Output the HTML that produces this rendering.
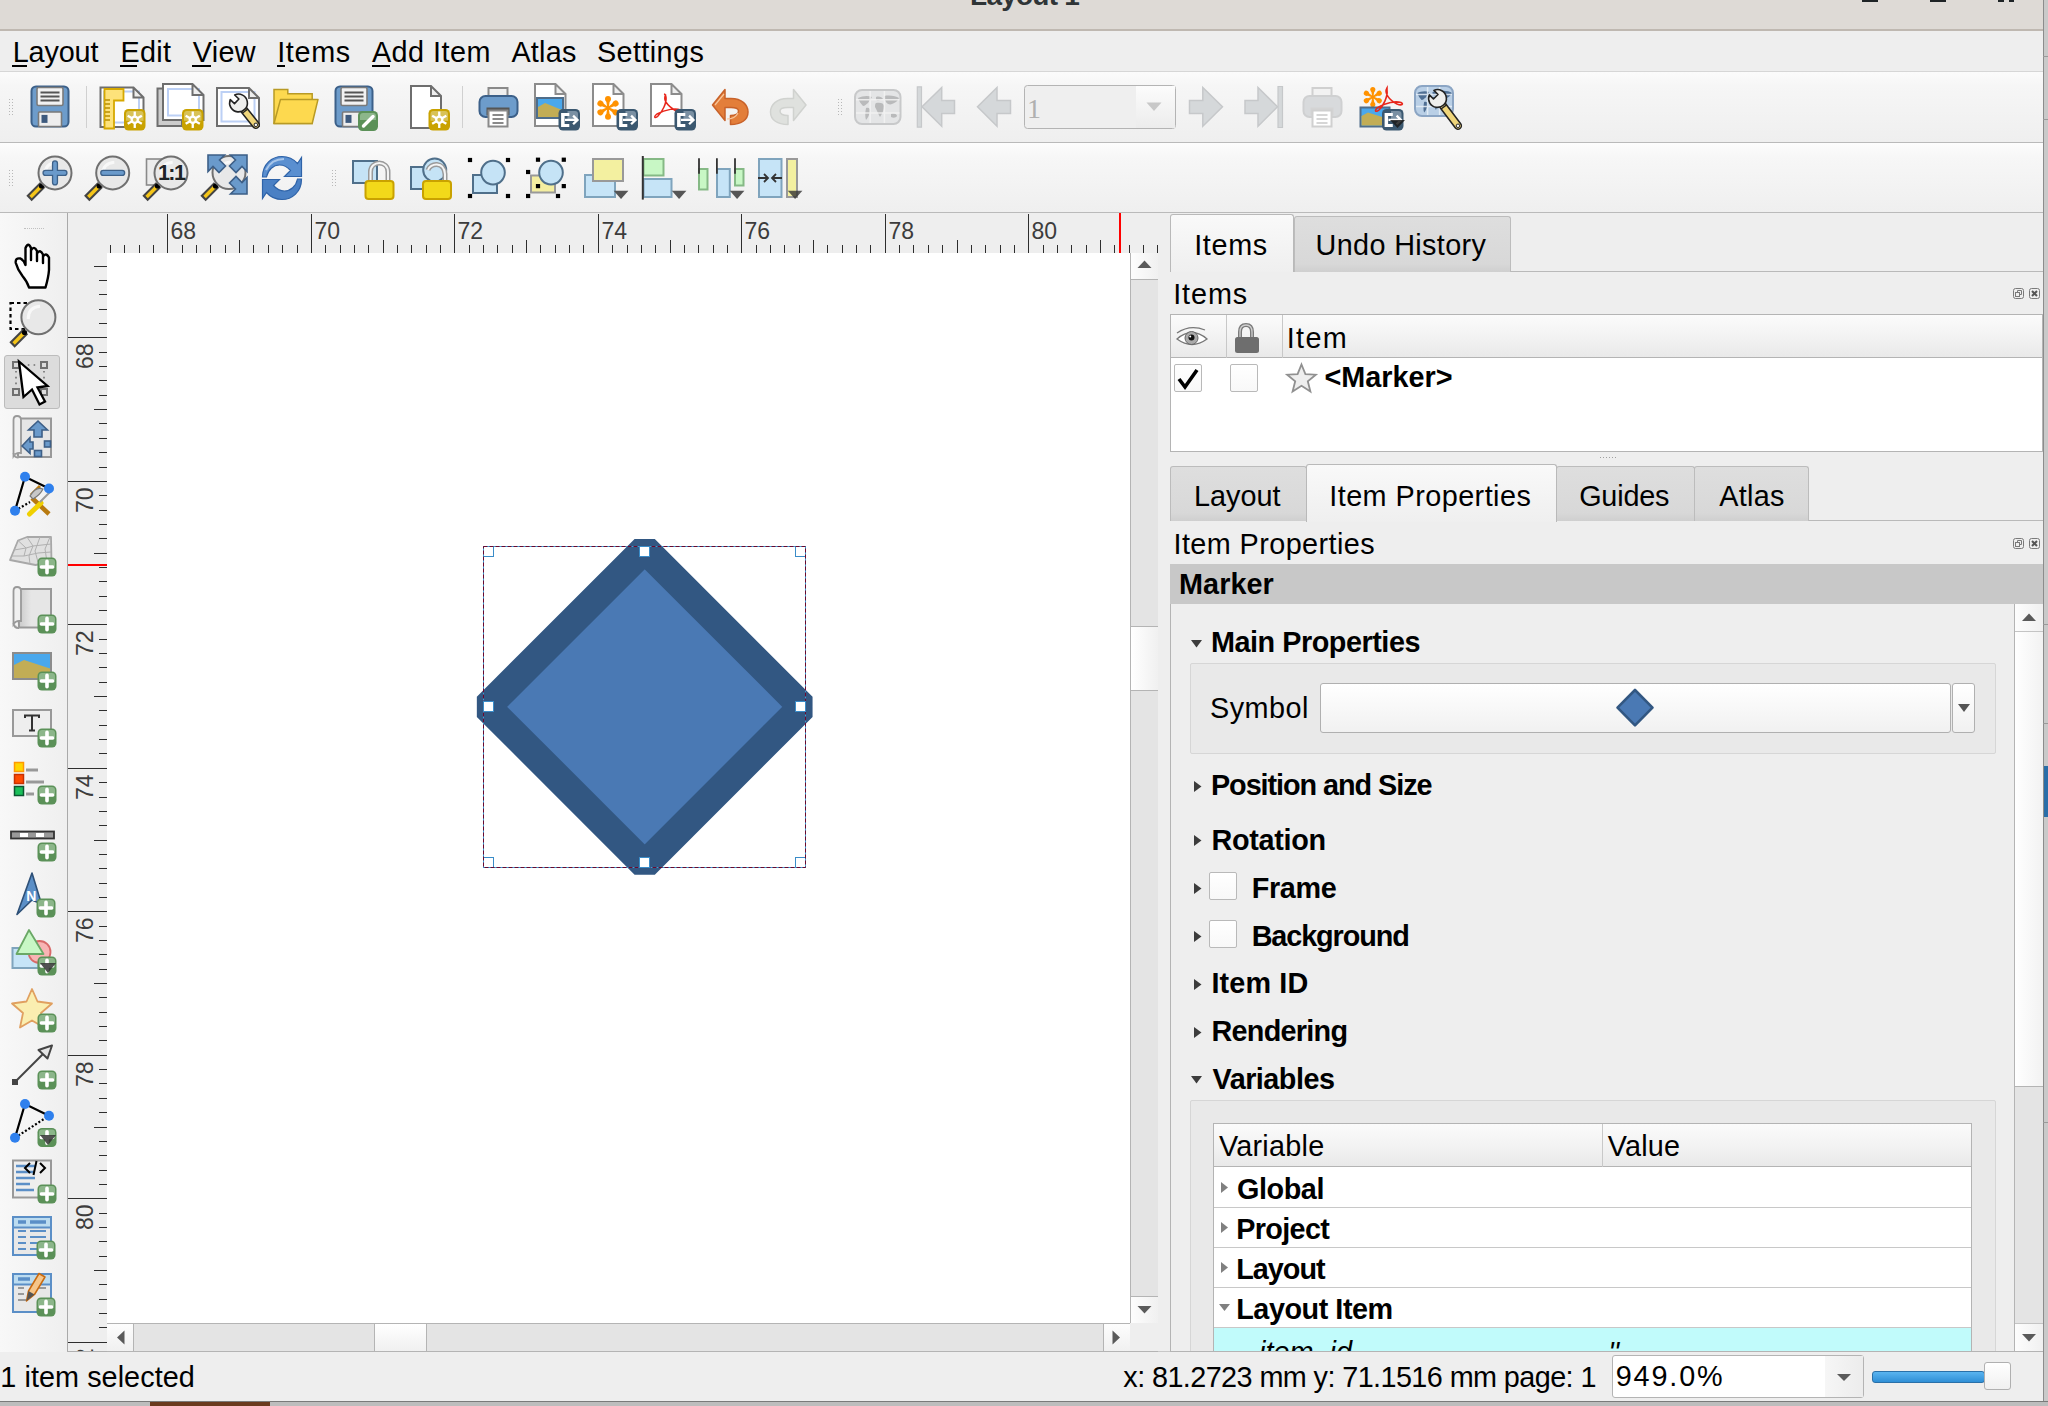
<!DOCTYPE html><html><head><meta charset="utf-8"><style>
html,body{margin:0;padding:0;width:2048px;height:1406px;overflow:hidden;background:#c8c8c8;}
body{position:relative;font-family:"Liberation Sans",sans-serif;}
div{position:absolute;box-sizing:border-box;}
.t{white-space:pre;line-height:1;}
svg{position:absolute;overflow:visible;}
</style></head><body>
<div style="left:2043px;top:0px;width:5px;height:1406px;background:#c9c9c9;border-left:1px solid #8c8c8c;"></div>
<div style="left:2043px;top:56px;width:5px;height:1px;background:#9a9a9a;"></div>
<div style="left:2043px;top:119px;width:5px;height:1px;background:#9a9a9a;"></div>
<div style="left:2043px;top:624px;width:5px;height:1px;background:#9a9a9a;"></div>
<div style="left:2043px;top:723px;width:5px;height:1px;background:#9a9a9a;"></div>
<div style="left:2043px;top:1122px;width:5px;height:1px;background:#9a9a9a;"></div>
<div style="left:2044px;top:766px;width:4px;height:51px;background:#2a6ea8;"></div>
<div style="left:0px;top:1401px;width:2048px;height:5px;background:#bdbdbd;border-top:1px solid #7a7a7a;"></div>
<div style="left:150px;top:1402px;width:120px;height:4px;background:#6b3a1e;"></div>
<div style="left:0px;top:0px;width:2043px;height:29px;background:#dedad6;"></div>
<div style="left:0px;top:29px;width:2043px;height:2px;background:#bfb8b1;"></div>
<div class="t" style="left:970.11px;top:-18.20px;font-size:28px;font-weight:700;color:#2e3436;letter-spacing:-0.774px;">Layout 1</div>
<div style="left:1862px;top:0px;width:16px;height:2px;background:#1e2326;"></div>
<div style="left:1930px;top:0px;width:16px;height:2px;background:#1e2326;"></div>
<div style="left:1998px;top:0px;width:6px;height:2px;background:#1e2326;"></div>
<div style="left:2009px;top:0px;width:5px;height:2px;background:#1e2326;"></div>
<div style="left:0px;top:31px;width:2043px;height:40px;background:#eeeeee;"></div>
<div style="left:0px;top:71px;width:2043px;height:1px;background:#d6d6d6;"></div>
<div class="t" style="left:12.72px;top:37.52px;font-size:28.8px;font-weight:400;color:#000;letter-spacing:-0.136px;">Layout</div>
<div class="t" style="left:120.62px;top:37.52px;font-size:28.8px;font-weight:400;color:#000;letter-spacing:0.228px;">Edit</div>
<div class="t" style="left:192.76px;top:37.52px;font-size:28.8px;font-weight:400;color:#000;letter-spacing:0.317px;">View</div>
<div class="t" style="left:277.14px;top:37.52px;font-size:28.8px;font-weight:400;color:#000;letter-spacing:0.664px;">Items</div>
<div class="t" style="left:371.93px;top:37.52px;font-size:28.8px;font-weight:400;color:#000;letter-spacing:0.482px;">Add Item</div>
<div class="t" style="left:511.43px;top:37.52px;font-size:28.8px;font-weight:400;color:#000;letter-spacing:0.218px;">Atlas</div>
<div class="t" style="left:596.90px;top:37.52px;font-size:28.8px;font-weight:400;color:#000;letter-spacing:0.409px;">Settings</div>
<div style="left:12px;top:65px;width:15px;height:2px;background:#000;"></div>
<div style="left:120px;top:65px;width:17px;height:2px;background:#000;"></div>
<div style="left:192px;top:65px;width:19px;height:2px;background:#000;"></div>
<div style="left:277px;top:65px;width:8px;height:2px;background:#000;"></div>
<div style="left:372px;top:65px;width:18px;height:2px;background:#000;"></div>
<div style="left:0px;top:72px;width:2043px;height:70px;background:linear-gradient(#fbfbfb,#f6f6f6 20%,#efefef);"></div>
<div style="left:0px;top:142px;width:2043px;height:1px;background:#bababa;"></div>
<div style="left:0px;top:143px;width:2043px;height:69px;background:linear-gradient(#fdfdfd,#f7f7f7 20%,#efefef);"></div>
<div style="left:0px;top:212px;width:2043px;height:1px;background:#bababa;"></div>
<div style="left:9px;top:99px;width:1px;height:1px;background:#b8b8b8;"></div><div style="left:12px;top:99px;width:1px;height:1px;background:#b8b8b8;"></div><div style="left:9px;top:102px;width:1px;height:1px;background:#b8b8b8;"></div><div style="left:12px;top:102px;width:1px;height:1px;background:#b8b8b8;"></div><div style="left:9px;top:105px;width:1px;height:1px;background:#b8b8b8;"></div><div style="left:12px;top:105px;width:1px;height:1px;background:#b8b8b8;"></div><div style="left:9px;top:108px;width:1px;height:1px;background:#b8b8b8;"></div><div style="left:12px;top:108px;width:1px;height:1px;background:#b8b8b8;"></div><div style="left:9px;top:111px;width:1px;height:1px;background:#b8b8b8;"></div><div style="left:12px;top:111px;width:1px;height:1px;background:#b8b8b8;"></div><div style="left:9px;top:114px;width:1px;height:1px;background:#b8b8b8;"></div><div style="left:12px;top:114px;width:1px;height:1px;background:#b8b8b8;"></div>
<div style="left:838px;top:99px;width:1px;height:1px;background:#b8b8b8;"></div><div style="left:841px;top:99px;width:1px;height:1px;background:#b8b8b8;"></div><div style="left:838px;top:102px;width:1px;height:1px;background:#b8b8b8;"></div><div style="left:841px;top:102px;width:1px;height:1px;background:#b8b8b8;"></div><div style="left:838px;top:105px;width:1px;height:1px;background:#b8b8b8;"></div><div style="left:841px;top:105px;width:1px;height:1px;background:#b8b8b8;"></div><div style="left:838px;top:108px;width:1px;height:1px;background:#b8b8b8;"></div><div style="left:841px;top:108px;width:1px;height:1px;background:#b8b8b8;"></div><div style="left:838px;top:111px;width:1px;height:1px;background:#b8b8b8;"></div><div style="left:841px;top:111px;width:1px;height:1px;background:#b8b8b8;"></div><div style="left:838px;top:114px;width:1px;height:1px;background:#b8b8b8;"></div><div style="left:841px;top:114px;width:1px;height:1px;background:#b8b8b8;"></div>
<div style="left:9px;top:170px;width:1px;height:1px;background:#b8b8b8;"></div><div style="left:12px;top:170px;width:1px;height:1px;background:#b8b8b8;"></div><div style="left:9px;top:173px;width:1px;height:1px;background:#b8b8b8;"></div><div style="left:12px;top:173px;width:1px;height:1px;background:#b8b8b8;"></div><div style="left:9px;top:176px;width:1px;height:1px;background:#b8b8b8;"></div><div style="left:12px;top:176px;width:1px;height:1px;background:#b8b8b8;"></div><div style="left:9px;top:179px;width:1px;height:1px;background:#b8b8b8;"></div><div style="left:12px;top:179px;width:1px;height:1px;background:#b8b8b8;"></div><div style="left:9px;top:182px;width:1px;height:1px;background:#b8b8b8;"></div><div style="left:12px;top:182px;width:1px;height:1px;background:#b8b8b8;"></div><div style="left:9px;top:185px;width:1px;height:1px;background:#b8b8b8;"></div><div style="left:12px;top:185px;width:1px;height:1px;background:#b8b8b8;"></div>
<div style="left:332px;top:170px;width:1px;height:1px;background:#b8b8b8;"></div><div style="left:335px;top:170px;width:1px;height:1px;background:#b8b8b8;"></div><div style="left:332px;top:173px;width:1px;height:1px;background:#b8b8b8;"></div><div style="left:335px;top:173px;width:1px;height:1px;background:#b8b8b8;"></div><div style="left:332px;top:176px;width:1px;height:1px;background:#b8b8b8;"></div><div style="left:335px;top:176px;width:1px;height:1px;background:#b8b8b8;"></div><div style="left:332px;top:179px;width:1px;height:1px;background:#b8b8b8;"></div><div style="left:335px;top:179px;width:1px;height:1px;background:#b8b8b8;"></div><div style="left:332px;top:182px;width:1px;height:1px;background:#b8b8b8;"></div><div style="left:335px;top:182px;width:1px;height:1px;background:#b8b8b8;"></div><div style="left:332px;top:185px;width:1px;height:1px;background:#b8b8b8;"></div><div style="left:335px;top:185px;width:1px;height:1px;background:#b8b8b8;"></div>
<div style="left:86px;top:86px;width:1px;height:42px;background:#d0d0d0;"></div>
<div style="left:462px;top:86px;width:1px;height:42px;background:#d0d0d0;"></div>
<svg style="left:0;top:0" width="2043" height="213"><defs><linearGradient id="cg" x1="0" y1="0" x2="0" y2="1"><stop offset="0" stop-color="#fcfcfc"/><stop offset="1" stop-color="#ececec"/></linearGradient></defs><rect x="31.5" y="86.5" width="37" height="40" rx="4.5" fill="#6d9ccb" stroke="#3c6089" stroke-width="2"/>
<rect x="37.0" y="87.5" width="26" height="18.06" rx="1.5" fill="#f2f2f2" stroke="#7a7a7a" stroke-width="1.6"/>
<path d="M40.5,92.5 H59.5 M40.5,96.5 H59.5 M40.5,100.5 H59.5" stroke="#555" stroke-width="2"/>
<rect x="38.5" y="111.96000000000001" width="23" height="14.54" rx="1" fill="#eeeeee" stroke="#7a7a7a" stroke-width="1.6"/>
<rect x="41.5" y="114.9" width="6" height="7.98" fill="#3d5a7e"/><path d="M100.5,87.5 H133.5 L143.5,97.5 V127.0 H100.5 Z" fill="#fff"/><rect x="104" y="91.5" width="35" height="31" fill="none" stroke="#bcd0f5" stroke-width="2"/>
<path d="M133.5,87.5 V97.5 H143.5 Z" fill="#eeeeee"/>
<path d="M100.5,87.5 H133.5 L143.5,97.5 V127.0 H100.5 Z M133.5,87.5 V97.5 H143.5" fill="none" stroke="#6e6e6e" stroke-width="2" stroke-linejoin="miter"/><path d="M104.5,89 H123.5 V100.5 H114 V128.5 H104.5 Z" fill="#fde27a" stroke="#d6a800" stroke-width="1.8"/><path d="M105,100 H110 M105,104 H110 M105,108 H110 M105,112 H110 M105,116 H110 M105,120 H110" stroke="#b88f00" stroke-width="1.5"/><g transform="translate(124,109)">
<rect x="0" y="0" width="21.5" height="21.5" rx="4.5" fill="#c9a200"/>
<path d="M2,5 Q2,2 5,2 H16.5 Q19.5,2 19.5,5 V11.825000000000001 H2 Z" fill="#d8c257"/>
<path d="M10.75,2.55 L10.75,18.95" stroke="#fff" stroke-width="2.3"/><path d="M3.65,6.65 L17.85,14.85" stroke="#fff" stroke-width="2.3"/><path d="M17.85,6.65 L3.65,14.85" stroke="#fff" stroke-width="2.3"/>
<circle cx="10.75" cy="10.75" r="4.2" fill="#fff"/><circle cx="10.75" cy="10.75" r="1.9" fill="#d8c257"/>
</g><path d="M157.5,88.5 H182 V126 H157.5 Z" fill="#cccccc" stroke="#6e6e6e" stroke-width="2"/><path d="M163,84 H192.5 L203.5,95 V120 H163 Z" fill="#fff"/><rect x="168" y="89" width="31" height="26.5" fill="none" stroke="#bcd0f5" stroke-width="2"/>
<path d="M192.5,84 V95 H203.5 Z" fill="#eeeeee"/>
<path d="M163,84 H192.5 L203.5,95 V120 H163 Z M192.5,84 V95 H203.5" fill="none" stroke="#6e6e6e" stroke-width="2" stroke-linejoin="miter"/><g transform="translate(182,109)">
<rect x="0" y="0" width="21.5" height="21.5" rx="4.5" fill="#c9a200"/>
<path d="M2,5 Q2,2 5,2 H16.5 Q19.5,2 19.5,5 V11.825000000000001 H2 Z" fill="#d8c257"/>
<path d="M10.75,2.55 L10.75,18.95" stroke="#fff" stroke-width="2.3"/><path d="M3.65,6.65 L17.85,14.85" stroke="#fff" stroke-width="2.3"/><path d="M17.85,6.65 L3.65,14.85" stroke="#fff" stroke-width="2.3"/>
<circle cx="10.75" cy="10.75" r="4.2" fill="#fff"/><circle cx="10.75" cy="10.75" r="1.9" fill="#d8c257"/>
</g><path d="M217,88 H249 L259,98 V126 H217 Z" fill="#fff"/><rect x="221.5" y="92" width="33" height="29.5" fill="none" stroke="#bcd0f5" stroke-width="2"/>
<path d="M249,88 V98 H259 Z" fill="#eeeeee"/>
<path d="M217,88 H249 L259,98 V126 H217 Z M249,88 V98 H259" fill="none" stroke="#6e6e6e" stroke-width="2" stroke-linejoin="miter"/><g transform="translate(238.5,103) rotate(51.5)">
<rect x="5" y="-3.4" width="26.312936623702353" height="6.8" rx="3.4" fill="#efd57a" stroke="#222" stroke-width="1.5"/>
<path d="M8,-3.4 V3.4 M10.5,-3.4 V3.4" stroke="#222" stroke-width="1.3"/>
<circle cx="27.912936623702354" cy="0" r="1.7" fill="#fff" stroke="#333" stroke-width="1"/>
<path d="M-8.3,-3.2 L-2.5,-3.2 L-2.5,3.2 L-8.3,3.2 A8.9,8.9 0 1 0 -8.3,-3.2 Z" transform="rotate(-8)" fill="#eeeeec" stroke="#222" stroke-width="1.6" stroke-linejoin="round"/>
</g><path d="M274,123.5 V89.5 H287.8 V93.8 H312.2 V123.5 Z" fill="#fdd94f" stroke="#b89a25" stroke-width="1.5"/><path d="M274,123.5 L280.5,99.4 H318 L312.2,123.5 Z" fill="#fdd94f" stroke="#b89a25" stroke-width="1.5" stroke-linejoin="round"/><rect x="335.5" y="86.5" width="37" height="40" rx="4.5" fill="#6d9ccb" stroke="#3c6089" stroke-width="2"/>
<rect x="341.0" y="87.5" width="26" height="18.06" rx="1.5" fill="#f2f2f2" stroke="#7a7a7a" stroke-width="1.6"/>
<path d="M344.5,92.5 H363.5 M344.5,96.5 H363.5 M344.5,100.5 H363.5" stroke="#555" stroke-width="2"/>
<rect x="342.5" y="111.96000000000001" width="23" height="14.54" rx="1" fill="#eeeeee" stroke="#7a7a7a" stroke-width="1.6"/>
<rect x="345.5" y="114.9" width="6" height="7.98" fill="#3d5a7e"/><g transform="translate(358,111)"><rect width="20" height="20" rx="4.5" fill="#5b9158"/><path d="M2,5 Q2,2 5,2 H15 Q18,2 18,5 V9 H2 Z" fill="#8cb68a"/><path d="M5.5,15 L15,5.5" stroke="#fff" stroke-width="3.4" stroke-linecap="round"/></g><path d="M411,86 H431 L441,96 V128 H411 Z" fill="#fff"/>
<path d="M431,86 V96 H441 Z" fill="#eeeeee"/>
<path d="M411,86 H431 L441,96 V128 H411 Z M431,86 V96 H441" fill="none" stroke="#6e6e6e" stroke-width="2" stroke-linejoin="miter"/><g transform="translate(428.5,109)">
<rect x="0" y="0" width="21.5" height="21.5" rx="4.5" fill="#c9a200"/>
<path d="M2,5 Q2,2 5,2 H16.5 Q19.5,2 19.5,5 V11.825000000000001 H2 Z" fill="#d8c257"/>
<path d="M10.75,2.55 L10.75,18.95" stroke="#fff" stroke-width="2.3"/><path d="M3.65,6.65 L17.85,14.85" stroke="#fff" stroke-width="2.3"/><path d="M17.85,6.65 L3.65,14.85" stroke="#fff" stroke-width="2.3"/>
<circle cx="10.75" cy="10.75" r="4.2" fill="#fff"/><circle cx="10.75" cy="10.75" r="1.9" fill="#d8c257"/>
</g><rect x="488.5" y="88" width="19" height="13" fill="#efefef" stroke="#8a8a8a" stroke-width="2"/>
<rect x="479.5" y="96" width="38" height="21" rx="6" fill="#6d9ccb" stroke="#3c6089" stroke-width="2"/>
<rect x="486.5" y="107.5" width="23" height="8" fill="#555"/>
<rect x="488.5" y="110.5" width="19" height="16" fill="#fff" stroke="#8a8a8a" stroke-width="2"/>
<path d="M492.5,115 H503.5 M492.5,119 H503.5 M492.5,123 H503.5" stroke="#8a8a8a" stroke-width="1.8"/><path d="M535,84 H555.5 L565.5,94 V126 H535 Z" fill="#fff"/>
<path d="M555.5,84 V94 H565.5 Z" fill="#eeeeee"/>
<path d="M535,84 H555.5 L565.5,94 V126 H535 Z M555.5,84 V94 H565.5" fill="none" stroke="#8c8c8c" stroke-width="2" stroke-linejoin="miter"/><rect x="537" y="98" width="26" height="20" fill="#4aa8ec" stroke="#4f6d8a" stroke-width="2"/><path d="M538,107 L545,103 L562,110 V117 H538 Z" fill="#c2ad55"/><g transform="translate(558.5,109)">
<rect x="0" y="0" width="21.5" height="21.5" rx="4.5" fill="#3b5870"/>
<path d="M9,2 H16.5 Q19.5,2 19.5,5 V11.5 H9 Z" fill="#7a90a3"/>
<path d="M2.6,4.1 H10.8 V7 H6.1 V15 H10.8 V17.9 H2.6 Z" fill="#fff"/>
<path d="M6.5,10.9 H18.5 M14.6,6.6 L19,10.9 L14.6,15.3" fill="none" stroke="#fff" stroke-width="2.3"/>
</g><path d="M593,84 H613.5 L623.5,94 V126 H593 Z" fill="#fff"/>
<path d="M613.5,84 V94 H623.5 Z" fill="#eeeeee"/>
<path d="M593,84 H613.5 L623.5,94 V126 H593 Z M613.5,84 V94 H623.5" fill="none" stroke="#8c8c8c" stroke-width="2" stroke-linejoin="miter"/><g transform="translate(608,107.9) scale(1.0)" fill="#ff9200"><g transform="rotate(0)"><circle cx="0" cy="-8.8" r="3"/><path d="M-0.7,0 L-2.1,-8.8 H2.1 L0.7,0 Z"/></g><g transform="rotate(60)"><circle cx="0" cy="-8.8" r="3"/><path d="M-0.7,0 L-2.1,-8.8 H2.1 L0.7,0 Z"/></g><g transform="rotate(120)"><circle cx="0" cy="-8.8" r="3"/><path d="M-0.7,0 L-2.1,-8.8 H2.1 L0.7,0 Z"/></g><g transform="rotate(180)"><circle cx="0" cy="-8.8" r="3"/><path d="M-0.7,0 L-2.1,-8.8 H2.1 L0.7,0 Z"/></g><g transform="rotate(240)"><circle cx="0" cy="-8.8" r="3"/><path d="M-0.7,0 L-2.1,-8.8 H2.1 L0.7,0 Z"/></g><g transform="rotate(300)"><circle cx="0" cy="-8.8" r="3"/><path d="M-0.7,0 L-2.1,-8.8 H2.1 L0.7,0 Z"/></g><circle r="2.2"/></g><g transform="translate(616.5,109)">
<rect x="0" y="0" width="21.5" height="21.5" rx="4.5" fill="#3b5870"/>
<path d="M9,2 H16.5 Q19.5,2 19.5,5 V11.5 H9 Z" fill="#7a90a3"/>
<path d="M2.6,4.1 H10.8 V7 H6.1 V15 H10.8 V17.9 H2.6 Z" fill="#fff"/>
<path d="M6.5,10.9 H18.5 M14.6,6.6 L19,10.9 L14.6,15.3" fill="none" stroke="#fff" stroke-width="2.3"/>
</g><path d="M651,84 H671.5 L681.5,94 V126 H651 Z" fill="#fff"/>
<path d="M671.5,84 V94 H681.5 Z" fill="#eeeeee"/>
<path d="M651,84 H671.5 L681.5,94 V126 H651 Z M671.5,84 V94 H681.5" fill="none" stroke="#8c8c8c" stroke-width="2" stroke-linejoin="miter"/><path d="M665.5,95 C663,100 668,106 676,111 C680,113 683,112 680.5,110 C676,108 666,109 657,114 C653,117 655,119 658,116 C662,112 667,103 666,97 C665.5,93 663.5,94 665.5,95 Z" fill="none" stroke="#e8261b" stroke-width="1.5"/><g transform="translate(674.5,109)">
<rect x="0" y="0" width="21.5" height="21.5" rx="4.5" fill="#3b5870"/>
<path d="M9,2 H16.5 Q19.5,2 19.5,5 V11.5 H9 Z" fill="#7a90a3"/>
<path d="M2.6,4.1 H10.8 V7 H6.1 V15 H10.8 V17.9 H2.6 Z" fill="#fff"/>
<path d="M6.5,10.9 H18.5 M14.6,6.6 L19,10.9 L14.6,15.3" fill="none" stroke="#fff" stroke-width="2.3"/>
</g><path d="M712.5,105 L725,89.5 V98.5 H731 C742,98.5 748,105 748,112 C748,120 741,124.5 730.5,124.5 V115.5 C736,115.5 738.5,113.5 738.5,111 C738.5,108.5 736,107.5 731,107.5 H725 V120.5 Z" fill="#e37e3a" stroke="#c8622a" stroke-width="1.5" stroke-linejoin="round"/><path d="M715,105 L724,94 M727,119 C733,119 736,117 738,113" fill="none" stroke="#f7c59a" stroke-width="1.2"/><g transform="translate(1518.5,0) scale(-1,1)"><path d="M712.5,105 L725,89.5 V98.5 H731 C742,98.5 748,105 748,112 C748,120 741,124.5 730.5,124.5 V115.5 C736,115.5 738.5,113.5 738.5,111 C738.5,108.5 736,107.5 731,107.5 H725 V120.5 Z" fill="#dfe1de" stroke="#d0d2cf" stroke-width="1.5" stroke-linejoin="round"/></g><rect x="855" y="90" width="45.5" height="34" rx="7" fill="#e4e5e6" stroke="#c8c9ca" stroke-width="2"/>
<path transform="translate(854,89) scale(1.000,1.000)" d="M4,9 C8,7 14,6 18,8 C17,10 15,12 14,14 C12,15 11,17 9,17 C7,15 5,12 4,9 Z M12,19 C15,18 17,20 16,23 C15,26 14,29 12,31 C11,28 11,24 12,19 Z M22,8 C25,7 28,8 29,10 C27,11 24,12 22,11 Z M22,14 C26,13 30,14 30,17 C30,21 28,25 26,28 C24,25 23,21 21,18 C21,16 21,15 22,14 Z M30,7 C36,6 42,7 45,9 C44,12 41,14 38,15 C36,16 33,15 32,13 C31,11 30,9 30,7 Z M37,25 C40,24 43,25 43,27 C42,29 39,29 37,28 Z" fill="#b9babb"/>
<path d="M870.15,91 V123 M884.4,91 V123 M856,99.8 H899.5 M856,113.12 H899.5" stroke="#f4f4f4" stroke-width="1.5" opacity="0.85"/><path d="M917.3,86.8 H921.5 V127.2 H917.3 Z" fill="#d5d8da" stroke="#c6c8ca" stroke-width="1.2"/><path d="M922,106.8 L941.7,87.5 V100.4 H954.5 V113.4 H941.7 V126.2 Z" fill="#d5d8da" stroke="#c6c8ca" stroke-width="1.5" stroke-linejoin="miter"/><path d="M977.5,106.8 L997,87.5 V100.4 H1010.5 V113.4 H997 V126.2 Z" fill="#d5d8da" stroke="#c6c8ca" stroke-width="1.5"/><rect x="1024.5" y="85.5" width="151" height="43" rx="3" fill="#efefef" stroke="#b4b4b4" stroke-width="1"/><rect x="1136" y="86" width="39" height="42" fill="url(#cg)"/><polygon points="1146.5,102.5 1161.5,102.5 1154,111" fill="#c8c8c8"/><text x="1027" y="117.5" font-family="Liberation Serif" font-size="28" fill="#b0b0b0">1</text><path d="M1222.5,106.8 L1202.8,87.5 V100.4 H1189.5 V113.4 H1202.8 V126.2 Z" fill="#d5d8da" stroke="#c6c8ca" stroke-width="1.5"/><path d="M1277.5,106.8 L1258,87.5 V100.4 H1245 V113.4 H1258 V126.2 Z" fill="#d5d8da" stroke="#c6c8ca" stroke-width="1.5"/><path d="M1278,86.5 H1282.5 V127.5 H1278 Z" fill="#d5d8da" stroke="#c6c8ca" stroke-width="1.2"/><rect x="1312.5" y="88" width="19" height="13" fill="#f2f2f2" stroke="#d0d0d0" stroke-width="2"/>
<rect x="1303.5" y="96" width="38" height="21" rx="6" fill="#d8dadc" stroke="#cfd0d1" stroke-width="2"/>
<rect x="1310.5" y="107.5" width="23" height="8" fill="#d4d4d4"/>
<rect x="1312.5" y="110.5" width="19" height="16" fill="#fff" stroke="#d0d0d0" stroke-width="2"/>
<path d="M1316.5,115 H1327.5 M1316.5,119 H1327.5 M1316.5,123 H1327.5" stroke="#d6d6d6" stroke-width="1.8"/><g transform="translate(1372.8,97) scale(0.85)" fill="#ff9200"><g transform="rotate(0)"><circle cx="0" cy="-8.8" r="3"/><path d="M-0.7,0 L-2.1,-8.8 H2.1 L0.7,0 Z"/></g><g transform="rotate(60)"><circle cx="0" cy="-8.8" r="3"/><path d="M-0.7,0 L-2.1,-8.8 H2.1 L0.7,0 Z"/></g><g transform="rotate(120)"><circle cx="0" cy="-8.8" r="3"/><path d="M-0.7,0 L-2.1,-8.8 H2.1 L0.7,0 Z"/></g><g transform="rotate(180)"><circle cx="0" cy="-8.8" r="3"/><path d="M-0.7,0 L-2.1,-8.8 H2.1 L0.7,0 Z"/></g><g transform="rotate(240)"><circle cx="0" cy="-8.8" r="3"/><path d="M-0.7,0 L-2.1,-8.8 H2.1 L0.7,0 Z"/></g><g transform="rotate(300)"><circle cx="0" cy="-8.8" r="3"/><path d="M-0.7,0 L-2.1,-8.8 H2.1 L0.7,0 Z"/></g><circle r="2.2"/></g><rect x="1360.5" y="107.5" width="29" height="19" fill="#4aa8ec" stroke="#4f6d8a" stroke-width="2"/><path d="M1361.5,116 L1368,112.5 L1388.5,119 V125.5 H1361.5 Z" fill="#c2ad55"/><path d="M1387,88 C1384,93 1389,100 1397,104 C1402,106 1404,104 1401,102.5 C1396,101 1386,102 1377,108 C1374,111 1376,112.5 1379,110 C1383,106 1388,97 1387,90 Z" fill="none" stroke="#e8261b" stroke-width="1.6"/><g transform="translate(1382,109)">
<rect x="0" y="0" width="21.5" height="21.5" rx="4.5" fill="#3b5870"/>
<path d="M9,2 H16.5 Q19.5,2 19.5,5 V11.5 H9 Z" fill="#7a90a3"/>
<path d="M2.6,4.1 H10.8 V7 H6.1 V15 H10.8 V17.9 H2.6 Z" fill="#fff"/>
<path d="M6.5,10.9 H18.5 M14.6,6.6 L19,10.9 L14.6,15.3" fill="none" stroke="#fff" stroke-width="2.3"/>
</g><polygon points="1390,120 1405,120 1397.5,128" fill="#1a1a1a" opacity="0.85"/><rect x="1415" y="86" width="38" height="30" rx="7" fill="#b9cfe6" stroke="#8ba5c4" stroke-width="2"/>
<path transform="translate(1414,85) scale(0.842,0.889)" d="M4,9 C8,7 14,6 18,8 C17,10 15,12 14,14 C12,15 11,17 9,17 C7,15 5,12 4,9 Z M12,19 C15,18 17,20 16,23 C15,26 14,29 12,31 C11,28 11,24 12,19 Z M22,8 C25,7 28,8 29,10 C27,11 24,12 22,11 Z M22,14 C26,13 30,14 30,17 C30,21 28,25 26,28 C24,25 23,21 21,18 C21,16 21,15 22,14 Z M30,7 C36,6 42,7 45,9 C44,12 41,14 38,15 C36,16 33,15 32,13 C31,11 30,9 30,7 Z M37,25 C40,24 43,25 43,27 C42,29 39,29 37,28 Z" fill="#4f6f94"/>
<path d="M1427.6,87 V115 M1439.6,87 V115 M1416,94.6 H1452 M1416,106.44 H1452" stroke="#e8f0f8" stroke-width="1.5" opacity="0.85"/><g transform="translate(1437.5,98.5) rotate(53.1)">
<rect x="5" y="-3.4" width="32.5" height="6.8" rx="3.4" fill="#efd57a" stroke="#222" stroke-width="1.5"/>
<path d="M8,-3.4 V3.4 M10.5,-3.4 V3.4" stroke="#222" stroke-width="1.3"/>
<circle cx="34.1" cy="0" r="1.7" fill="#fff" stroke="#333" stroke-width="1"/>
<path d="M-8.3,-3.2 L-2.5,-3.2 L-2.5,3.2 L-8.3,3.2 A8.9,8.9 0 1 0 -8.3,-3.2 Z" transform="rotate(-8)" fill="#eeeeec" stroke="#222" stroke-width="1.6" stroke-linejoin="round"/>
</g>
<path d="M29,198.5 L42.5,185" stroke="#444" stroke-width="7.5" stroke-linecap="butt"/>
<path d="M30.6,196.9 L40.5,187" stroke="#f5c518" stroke-width="3.5"/>
<circle cx="41.5" cy="186" r="2.6" fill="#000"/>
<circle cx="55" cy="172.9" r="16.5" fill="#e8e8e8" stroke="#707070" stroke-width="2"/>
<path d="M45.1,174.55 Q45.1,163.0 56.65,162.175" fill="none" stroke="#fafafa" stroke-width="3" opacity="0.9"/><path d="M45.5,172.9 H64.5 M55,163.4 V182.4" stroke="#3d6189" stroke-width="6.2" stroke-linecap="round"/><path d="M45.5,172.9 H64.5 M55,163.4 V182.4" stroke="#6a9acb" stroke-width="3.6" stroke-linecap="round"/><path d="M86.7,198.5 L100.2,185" stroke="#444" stroke-width="7.5" stroke-linecap="butt"/>
<path d="M88.3,196.9 L98.2,187" stroke="#f5c518" stroke-width="3.5"/>
<circle cx="99.2" cy="186" r="2.6" fill="#000"/>
<circle cx="112.7" cy="172.9" r="16.5" fill="#e8e8e8" stroke="#707070" stroke-width="2"/>
<path d="M102.8,174.55 Q102.8,163.0 114.35000000000001,162.175" fill="none" stroke="#fafafa" stroke-width="3" opacity="0.9"/><path d="M103.2,172.9 H122.2" stroke="#3d6189" stroke-width="6.2" stroke-linecap="round"/><path d="M103.2,172.9 H122.2" stroke="#6a9acb" stroke-width="3.6" stroke-linecap="round"/><rect x="146.5" y="159" width="22" height="26" fill="#ececec" stroke="#8a8a8a" stroke-width="1.6"/><path d="M145,198.5 L158.5,185" stroke="#444" stroke-width="7.5" stroke-linecap="butt"/>
<path d="M146.6,196.9 L156.5,187" stroke="#f5c518" stroke-width="3.5"/>
<circle cx="157.5" cy="186" r="2.6" fill="#000"/>
<circle cx="171" cy="172.9" r="16.5" fill="#e8e8e8" stroke="#707070" stroke-width="2"/>
<path d="M161.1,174.55 Q161.1,163.0 172.65,162.175" fill="none" stroke="#fafafa" stroke-width="3" opacity="0.9"/><text x="158" y="179.6" font-family="Liberation Sans" font-weight="700" font-size="21.5" fill="#1e2326" letter-spacing="-1.6">1:1</text><path d="M203,198.5 L216.5,185" stroke="#444" stroke-width="7.5" stroke-linecap="butt"/>
<path d="M204.6,196.9 L214.5,187" stroke="#f5c518" stroke-width="3.5"/>
<circle cx="215.5" cy="186" r="2.6" fill="#000"/>
<circle cx="229" cy="172.6" r="16.5" fill="#e8e8e8" stroke="#707070" stroke-width="2"/>
<path d="M219.1,174.25 Q219.1,162.7 230.65,161.875" fill="none" stroke="#fafafa" stroke-width="3" opacity="0.9"/><path transform="translate(208,155) scale(1,1)" d="M0,0 H16.5 L11.5,5 L17.5,11 L11,17.5 L5,11.5 L0,16.5 Z" fill="#6a9acb" stroke="#3d5f87" stroke-width="1.6" stroke-linejoin="miter"/><path transform="translate(247,155) scale(-1,1)" d="M0,0 H16.5 L11.5,5 L17.5,11 L11,17.5 L5,11.5 L0,16.5 Z" fill="#6a9acb" stroke="#3d5f87" stroke-width="1.6" stroke-linejoin="miter"/><path transform="translate(247,194) scale(-1,-1)" d="M0,0 H16.5 L11.5,5 L17.5,11 L11,17.5 L5,11.5 L0,16.5 Z" fill="#6a9acb" stroke="#3d5f87" stroke-width="1.6" stroke-linejoin="miter"/><rect x="204" y="152" width="6" height="6" fill="none"/><path d="M262.5,177 C262.5,164 272,156.5 282,156.5 C289,156.5 294,159.5 297.5,163.5 L301.5,157.5 L301.5,176.5 L284.5,176.5 L290.5,170.5 C287.5,167 284,165 279.5,165 C273.5,165 268,169.5 266.5,177 Z" fill="#5a8fd0" stroke="#2f63a8" stroke-width="1.2" stroke-linejoin="miter"/><path transform="rotate(180,282,178)" d="M262.5,177 C262.5,164 272,156.5 282,156.5 C289,156.5 294,159.5 297.5,163.5 L301.5,157.5 L301.5,176.5 L284.5,176.5 L290.5,170.5 C287.5,167 284,165 279.5,165 C273.5,165 268,169.5 266.5,177 Z" fill="#4a80c4" stroke="#2f63a8" stroke-width="1.2" stroke-linejoin="miter"/><path d="M266,170 C270,162 277,159 284,159" fill="none" stroke="#a8c6ea" stroke-width="2"/><rect x="353" y="161" width="24" height="22" fill="#c5e3f6" stroke="#4f6f8a" stroke-width="2"/><path d="M370.5,182 V172 C370.5,160 388,160 388,172 V182" fill="none" stroke="#9a9a9a" stroke-width="5"/><path d="M370.5,182 V172 C370.5,160 388,160 388,172 V182" fill="none" stroke="#f4f4f4" stroke-width="2"/><rect x="365.5" y="181" width="28" height="18" rx="3" fill="#f2d91a" stroke="#c9a200" stroke-width="2"/><rect x="411" y="167" width="22" height="22" fill="#c5e3f6" stroke="#4f6f8a" stroke-width="2"/><circle cx="434.7" cy="170" r="11.5" fill="#c5e3f6" stroke="#4f6f8a" stroke-width="2"/><path d="M428,170 C430,163 444,161 445,174 V182" fill="none" stroke="#9a9a9a" stroke-width="5"/><path d="M428,170 C430,163 444,161 445,174 V182" fill="none" stroke="#f4f4f4" stroke-width="2"/><rect x="423" y="181" width="28" height="18" rx="3" fill="#f2d91a" stroke="#c9a200" stroke-width="2"/><rect x="473" y="175" width="24" height="18" fill="#c5e3f6" stroke="#4f6f8a" stroke-width="2"/><circle cx="493" cy="172.6" r="11.8" fill="#c5e3f6" stroke="#4f6f8a" stroke-width="2"/><rect x="467.9" y="157.9" width="4.2" height="4.2" fill="#000"/><rect x="505.9" y="157.9" width="4.2" height="4.2" fill="#000"/><rect x="467.9" y="193.9" width="4.2" height="4.2" fill="#000"/><rect x="505.9" y="193.9" width="4.2" height="4.2" fill="#000"/><rect x="531" y="175.5" width="24" height="17" fill="#f4eea0" stroke="#999" stroke-width="2"/><circle cx="551" cy="172.6" r="11.8" fill="#c5e3f6" stroke="#4f6f8a" stroke-width="2"/><rect x="535.9" y="157.6" width="4.2" height="4.2" fill="#000"/><rect x="561.6999999999999" y="157.6" width="4.2" height="4.2" fill="#000"/><rect x="526.0" y="169.9" width="4.2" height="4.2" fill="#000"/><rect x="535.9" y="184.0" width="4.2" height="4.2" fill="#000"/><rect x="561.6999999999999" y="184.0" width="4.2" height="4.2" fill="#000"/><rect x="526.0" y="193.9" width="4.2" height="4.2" fill="#000"/><rect x="555.9" y="193.9" width="4.2" height="4.2" fill="#000"/><rect x="585" y="175" width="30" height="22" fill="#c6e4f7" stroke="#7fa4bd" stroke-width="2"/><rect x="593" y="159" width="30" height="22" fill="#f3f0a0" stroke="#999" stroke-width="2"/><polygon points="613.7,190.8 628.4000000000001,190.8 621.0500000000001,199.0" fill="#555" opacity="1"/><rect x="643.5" y="159" width="20" height="16.5" fill="#c8f7c5" stroke="#85b985" stroke-width="2"/><rect x="643.5" y="179" width="28" height="18" fill="#c6e4f7" stroke="#7fa4bd" stroke-width="2"/><path d="M642.8,156 V199.6" stroke="#333" stroke-width="2"/><polygon points="671.8,190.8 686.4,190.8 679.0999999999999,199.0" fill="#555" opacity="1"/><rect x="699" y="169" width="8.5" height="20.5" fill="#c8f7c5" stroke="#85b985" stroke-width="2"/><rect x="717" y="169" width="12.8" height="28" fill="#c6e4f7" stroke="#7fa4bd" stroke-width="2"/><rect x="735" y="169" width="8.5" height="16.5" fill="#c8f7c5" stroke="#85b985" stroke-width="2"/><path d="M699,158.3 V173.8 M716.9,158.3 V173.8 M735,158.3 V173.8" stroke="#333" stroke-width="1.8"/><polygon points="729.8,190.8 744.4,190.8 737.0999999999999,199.0" fill="#555" opacity="1"/><rect x="759" y="159" width="22.5" height="38" fill="#c6e4f7" stroke="#7fa4bd" stroke-width="2"/><rect x="787" y="159" width="10" height="38" fill="#f3f0a0" stroke="#999" stroke-width="2"/><path d="M758,178 H768 M764,174 L768,178 L764,182 M782,178 H772 M776,174 L772,178 L776,182" fill="none" stroke="#333" stroke-width="1.8"/><polygon points="787.8,190.8 802.4,190.8 795.0999999999999,199.0" fill="#333" opacity="0.8"/></svg>
<div style="left:0px;top:213px;width:67px;height:1139px;background:linear-gradient(90deg,#f8f8f8,#efefef);"></div>
<div style="left:24px;top:228px;width:20px;height:1px;border-top:1px dotted #c0c0c0;"></div>
<div style="left:4px;top:355px;width:56px;height:54px;background:#dcdcdc;border:1px solid #bcbcbc;border-radius:3px;"></div>
<svg style="left:0;top:0" width="67" height="1351"><defs><linearGradient id="rg" x1="0" x2="1"><stop offset="0" stop-color="#c8c8c8"/><stop offset="0.4" stop-color="#e6e6e6"/></linearGradient></defs><path transform="translate(0,0)" d="M25.5,263 V248 Q28.2,241.5 31,248 V260 V250.5 Q34,245 37,251 V261 V253.5 Q40,248.5 43,254.5 V263 V256.5 Q46,252 49,257.5 V270 Q48.5,277 45.5,287.5 H29 Q27.5,282 22.5,276 Q17.5,269.5 15.8,263 Q15,257.5 20.5,258.5 Q23.5,260 25.5,265 Z" fill="#fff" stroke="#000" stroke-width="2.4" stroke-linejoin="round"/><rect x="10.5" y="303" width="30" height="26" fill="none" stroke="#000" stroke-width="2.2" stroke-dasharray="3.5,3"/><path d="M12,345 L25.5,331.5" stroke="#444" stroke-width="7.5" stroke-linecap="butt"/>
<path d="M13.6,343.4 L23.5,333.5" stroke="#f5c518" stroke-width="3.5"/>
<circle cx="24.5" cy="332.5" r="2.6" fill="#000"/>
<circle cx="38.4" cy="317.3" r="17" fill="#e8e8e8" stroke="#707070" stroke-width="2"/>
<path d="M28.2,319.0 Q28.2,307.1 40.1,306.25" fill="none" stroke="#fafafa" stroke-width="3" opacity="0.9"/><g fill="none" stroke="#707070" stroke-width="2"><rect x="13" y="362" width="6" height="6"/><rect x="41" y="362" width="6" height="6"/><rect x="13" y="389" width="6" height="6"/><rect x="41" y="389" width="6" height="6"/></g><path d="M22,365 H39 M16,371 V386 M44,371 V386 M22,392 H39" stroke="#707070" stroke-width="1.6" stroke-dasharray="1.6,4.2"/><path d="M19,361.5 L23.5,397 L32,389.5 L39.5,404.5 L45,401.5 L37.5,387.5 L47.5,386 Z" fill="#fff" stroke="#000" stroke-width="2.3" stroke-linejoin="miter"/><path d="M18,418.5 H51 V457 H18 Z" fill="#e6e6e6" stroke="#999" stroke-width="2"/><path d="M13.5,420 Q13.5,416 17,416 Q21,416 21,420 V453 Q16,452 13.5,456 Z" fill="#f0f0f0" stroke="#999" stroke-width="1.8"/><path d="M13.5,453 Q14,458 18.5,457.5" fill="#ccc" stroke="#999" stroke-width="1.8"/><path d="M38,421 L47.5,430 H42 V437 H34 V430 H28.5 Z" fill="#6a9acb" stroke="#3d5f87" stroke-width="1.6"/><path d="M22,446 L30,437.5 V442 H33 V449 H30 V453.5 Z" fill="#6a9acb" stroke="#3d5f87" stroke-width="1.6"/><rect x="44.5" y="441" width="6" height="6" fill="#6a9acb" stroke="#3d5f87" stroke-width="1.6"/><rect x="34.5" y="450.5" width="7" height="6" fill="#6a9acb" stroke="#3d5f87" stroke-width="1.6"/><path d="M15,510.8 L25,476.8 L49,488.5" fill="none" stroke="#000" stroke-width="2.2"/><path d="M15,510.8 L30,502" fill="none" stroke="#000" stroke-width="2.2" stroke-dasharray="2,2"/><path d="M31,495 L40,486" stroke="#b87a10" stroke-width="3"/><path d="M32,498 L49,514" stroke="#b87a10" stroke-width="4.5"/><path d="M29.5,514 L41,503" stroke="#f0d000" stroke-width="5" stroke-linecap="round"/><path d="M30,496 Q36,486 43,489 Q40,495 33,499 Z" fill="#c8c8c8" stroke="#777" stroke-width="1.2"/><path d="M40,502 L51,491" stroke="#999" stroke-width="2"/><circle cx="25" cy="476.8" r="5" fill="#2f80ed"/><circle cx="49" cy="488.5" r="5" fill="#2f80ed"/><circle cx="15" cy="510.8" r="5" fill="#2f80ed"/><path d="M10,560 L18,540.5 L27,537 L51,537 L51.5,562 L35.5,565 Z" fill="#e0e0e0" stroke="#a8a8a8" stroke-width="1.8" stroke-linejoin="round"/><path d="M18,540.5 L26,548 L24,556 M27,537 L33,546 L29,556 L30,564 M40,537 L35,551 L38,562 M50,537 L45,549 L47,562 M14,550 L26,548 L33,546 L51,544 M12,556 L24,556 L38,553 L51,552" fill="none" stroke="#b0b0b0" stroke-width="1"/><g transform="translate(37.5,557.5)">
<rect x="0" y="0" width="19" height="19" rx="4.5" fill="#5b9158"/>
<path d="M1.5,4.5 Q1.5,1.5 4.5,1.5 H14.5 Q17.5,1.5 17.5,4.5 V8.55 H1.5 Z" fill="#8cb68a"/>
<path d="M9.5,3.8000000000000003 V15.200000000000001 M3.8000000000000003,9.5 H15.200000000000001" stroke="#fff" stroke-width="3.6" stroke-linecap="round"/>
</g><path d="M18,589 H51 V627.5 H19 Z" fill="url(#rg)" stroke="#999" stroke-width="2"/><path d="M13.5,591 Q13.5,587 17,587 Q21,587 21,591 V621 Q16,620 13.5,624 Z" fill="#f0f0f0" stroke="#999" stroke-width="1.8"/><path d="M13.5,623 Q14,628.5 19,628" fill="#ccc" stroke="#999" stroke-width="1.8"/><g transform="translate(37.5,614.5)">
<rect x="0" y="0" width="19" height="19" rx="4.5" fill="#5b9158"/>
<path d="M1.5,4.5 Q1.5,1.5 4.5,1.5 H14.5 Q17.5,1.5 17.5,4.5 V8.55 H1.5 Z" fill="#8cb68a"/>
<path d="M9.5,3.8000000000000003 V15.200000000000001 M3.8000000000000003,9.5 H15.200000000000001" stroke="#fff" stroke-width="3.6" stroke-linecap="round"/>
</g><rect x="13" y="653" width="38" height="26" fill="#4aa8ec" stroke="#8c8c8c" stroke-width="2"/><path d="M14,665 L24,660 L50,668.5 V678 H14 Z" fill="#c2ad55"/><g transform="translate(37.5,671.5)">
<rect x="0" y="0" width="19" height="19" rx="4.5" fill="#5b9158"/>
<path d="M1.5,4.5 Q1.5,1.5 4.5,1.5 H14.5 Q17.5,1.5 17.5,4.5 V8.55 H1.5 Z" fill="#8cb68a"/>
<path d="M9.5,3.8000000000000003 V15.200000000000001 M3.8000000000000003,9.5 H15.200000000000001" stroke="#fff" stroke-width="3.6" stroke-linecap="round"/>
</g><rect x="13" y="710" width="38" height="26" fill="#eeeeee" stroke="#999" stroke-width="2"/><path d="M25,718 V715.5 H39 V718 M32,715.5 V730.5 M29,730.5 H35" fill="none" stroke="#333" stroke-width="2"/><g transform="translate(37.5,728.5)">
<rect x="0" y="0" width="19" height="19" rx="4.5" fill="#5b9158"/>
<path d="M1.5,4.5 Q1.5,1.5 4.5,1.5 H14.5 Q17.5,1.5 17.5,4.5 V8.55 H1.5 Z" fill="#8cb68a"/>
<path d="M9.5,3.8000000000000003 V15.200000000000001 M3.8000000000000003,9.5 H15.200000000000001" stroke="#fff" stroke-width="3.6" stroke-linecap="round"/>
</g><rect x="14.5" y="762.5" width="9" height="9" fill="#ffd600" stroke="#ff9900" stroke-width="1.5"/><rect x="14.5" y="774.5" width="9" height="9" fill="#ff4a00" stroke="#c83000" stroke-width="1.5"/><rect x="14.5" y="786.5" width="9" height="9" fill="#1bbf5a" stroke="#0b5530" stroke-width="1.5"/><path d="M26,770 H38 M26,782 H44 M26,794 H34" stroke="#999" stroke-width="3"/><g transform="translate(37.5,785.5)">
<rect x="0" y="0" width="19" height="19" rx="4.5" fill="#5b9158"/>
<path d="M1.5,4.5 Q1.5,1.5 4.5,1.5 H14.5 Q17.5,1.5 17.5,4.5 V8.55 H1.5 Z" fill="#8cb68a"/>
<path d="M9.5,3.8000000000000003 V15.200000000000001 M3.8000000000000003,9.5 H15.200000000000001" stroke="#fff" stroke-width="3.6" stroke-linecap="round"/>
</g><rect x="11" y="831.5" width="43" height="7" fill="#999" stroke="#333" stroke-width="1.8"/><rect x="20" y="833" width="8" height="4" fill="#fff"/><rect x="36" y="833" width="8" height="4" fill="#fff"/><g transform="translate(37.5,842.5)">
<rect x="0" y="0" width="19" height="19" rx="4.5" fill="#5b9158"/>
<path d="M1.5,4.5 Q1.5,1.5 4.5,1.5 H14.5 Q17.5,1.5 17.5,4.5 V8.55 H1.5 Z" fill="#8cb68a"/>
<path d="M9.5,3.8000000000000003 V15.200000000000001 M3.8000000000000003,9.5 H15.200000000000001" stroke="#fff" stroke-width="3.6" stroke-linecap="round"/>
</g><path d="M32,873 L41.5,904 L32,900 L17,914.5 Z" fill="#5b8fc7" stroke="#2e5077" stroke-width="1.6" stroke-linejoin="round"/><text x="26.3" y="900.5" font-family="Liberation Sans" font-weight="700" font-size="14" fill="#fff">N</text><g transform="translate(36.5,898.5)">
<rect x="0" y="0" width="19" height="19" rx="4.5" fill="#5b9158"/>
<path d="M1.5,4.5 Q1.5,1.5 4.5,1.5 H14.5 Q17.5,1.5 17.5,4.5 V8.55 H1.5 Z" fill="#8cb68a"/>
<path d="M9.5,3.8000000000000003 V15.200000000000001 M3.8000000000000003,9.5 H15.200000000000001" stroke="#fff" stroke-width="3.6" stroke-linecap="round"/>
</g><rect x="12.5" y="948" width="26" height="20" fill="#c6e4f7" stroke="#7fa4bd" stroke-width="2"/><circle cx="39.5" cy="952" r="11" fill="#f8b4b4" stroke="#d86a6a" stroke-width="1.8"/><path d="M29,930 L43.5,954 H16.5 Z" fill="#c8f7c5" stroke="#6aa866" stroke-width="1.8" stroke-linejoin="round"/><g transform="translate(37.5,956.5)">
<rect x="0" y="0" width="19" height="19" rx="4.5" fill="#5b9158"/>
<path d="M1.5,4.5 Q1.5,1.5 4.5,1.5 H14.5 Q17.5,1.5 17.5,4.5 V8.55 H1.5 Z" fill="#8cb68a"/>
<path d="M9.5,3.8000000000000003 V15.200000000000001 M3.8000000000000003,9.5 H15.200000000000001" stroke="#fff" stroke-width="3.6" stroke-linecap="round"/>
</g><polygon points="40,963 56,963 48.0,973" fill="#333" opacity="0.85"/><polygon points="32,989 37.5,1001.5 52,1003.5 41,1013 44,1027.5 32,1020.5 20,1027.5 23,1013 12,1003.5 26.5,1001.5" fill="#faeeb0" stroke="#e0a060" stroke-width="1.8" stroke-linejoin="round"/><g transform="translate(37.5,1013.5)">
<rect x="0" y="0" width="19" height="19" rx="4.5" fill="#5b9158"/>
<path d="M1.5,4.5 Q1.5,1.5 4.5,1.5 H14.5 Q17.5,1.5 17.5,4.5 V8.55 H1.5 Z" fill="#8cb68a"/>
<path d="M9.5,3.8000000000000003 V15.200000000000001 M3.8000000000000003,9.5 H15.200000000000001" stroke="#fff" stroke-width="3.6" stroke-linecap="round"/>
</g><path d="M15,1082 L45,1052" stroke="#444" stroke-width="2"/><rect x="12" y="1079" width="6" height="6" fill="#444"/><polygon points="52,1045.5 38.5,1050 47.5,1058.5" fill="#e6e6e6" stroke="#444" stroke-width="2" stroke-linejoin="round"/><g transform="translate(37.5,1070.5)">
<rect x="0" y="0" width="19" height="19" rx="4.5" fill="#5b9158"/>
<path d="M1.5,4.5 Q1.5,1.5 4.5,1.5 H14.5 Q17.5,1.5 17.5,4.5 V8.55 H1.5 Z" fill="#8cb68a"/>
<path d="M9.5,3.8000000000000003 V15.200000000000001 M3.8000000000000003,9.5 H15.200000000000001" stroke="#fff" stroke-width="3.6" stroke-linecap="round"/>
</g><path d="M15,1137.8 L25,1104 L49,1115.7" fill="none" stroke="#000" stroke-width="2.2"/><path d="M15,1137.8 L49,1115.7" fill="none" stroke="#000" stroke-width="2.2" stroke-dasharray="2,2"/><g transform="translate(37.5,1128)">
<rect x="0" y="0" width="19" height="19" rx="4.5" fill="#5b9158"/>
<path d="M1.5,4.5 Q1.5,1.5 4.5,1.5 H14.5 Q17.5,1.5 17.5,4.5 V8.55 H1.5 Z" fill="#8cb68a"/>
<path d="M9.5,3.8000000000000003 V15.200000000000001 M3.8000000000000003,9.5 H15.200000000000001" stroke="#fff" stroke-width="3.6" stroke-linecap="round"/>
</g><polygon points="40,1135 56,1135 48.0,1145" fill="#333" opacity="0.85"/><circle cx="25" cy="1104" r="5" fill="#2f80ed"/><circle cx="49" cy="1115.7" r="5" fill="#2f80ed"/><circle cx="15" cy="1137.8" r="5" fill="#2f80ed"/><rect x="13" y="1160.5" width="38" height="37" fill="#eeeeee" stroke="#999" stroke-width="2"/><path d="M16,1166 H35 M16,1172 H35 M16,1178 H35 M16,1184 H30 M16,1190 H34" stroke="#5b8fc7" stroke-width="2.4"/><path d="M30,1163 L25,1168 L30,1173 M40,1163 L45,1168 L40,1173 M36.5,1161 L33.5,1175" fill="none" stroke="#000" stroke-width="2"/><g transform="translate(37.5,1184.5)">
<rect x="0" y="0" width="19" height="19" rx="4.5" fill="#5b9158"/>
<path d="M1.5,4.5 Q1.5,1.5 4.5,1.5 H14.5 Q17.5,1.5 17.5,4.5 V8.55 H1.5 Z" fill="#8cb68a"/>
<path d="M9.5,3.8000000000000003 V15.200000000000001 M3.8000000000000003,9.5 H15.200000000000001" stroke="#fff" stroke-width="3.6" stroke-linecap="round"/>
</g><rect x="13" y="1217" width="38" height="38" fill="#e8e8e8" stroke="#5b8fc7" stroke-width="2"/><rect x="14" y="1218" width="36" height="9" fill="#bcdcf0"/><path d="M13,1227.5 H51" stroke="#5b8fc7" stroke-width="1.8"/><path d="M18,1222 H26 M30,1222 H46" stroke="#5b8fc7" stroke-width="3.5"/><path d="M18,1231 H26 M30,1231 H46 M18,1237 H26 M30,1237 H46 M18,1243 H26 M30,1243 H46 M18,1249 H26 M30,1249 H46" stroke="#5b8fc7" stroke-width="1.8"/><g transform="translate(36.5,1240.5)">
<rect x="0" y="0" width="19" height="19" rx="4.5" fill="#5b9158"/>
<path d="M1.5,4.5 Q1.5,1.5 4.5,1.5 H14.5 Q17.5,1.5 17.5,4.5 V8.55 H1.5 Z" fill="#8cb68a"/>
<path d="M9.5,3.8000000000000003 V15.200000000000001 M3.8000000000000003,9.5 H15.200000000000001" stroke="#fff" stroke-width="3.6" stroke-linecap="round"/>
</g><rect x="13" y="1274" width="38" height="38" fill="#e8e8e8" stroke="#5b8fc7" stroke-width="2"/><rect x="14" y="1275" width="36" height="9" fill="#bcdcf0"/><path d="M13,1284.5 H51" stroke="#5b8fc7" stroke-width="1.8"/><path d="M18,1279 H30" stroke="#5b8fc7" stroke-width="3.5"/><path d="M18,1288 H24 M39,1288 H46 M18,1294 H24 M18,1300 H26" stroke="#999" stroke-width="1.8"/><path d="M26.5,1301 L28.5,1291 L39,1273.5 L45,1277 L34.5,1294.5 Z" fill="#f5c58a" stroke="#c86a10" stroke-width="1.5" stroke-linejoin="round"/><path d="M26.5,1301 L28.5,1291 L34.5,1294.5 Z" fill="#555"/><g transform="translate(36.5,1297.5)">
<rect x="0" y="0" width="19" height="19" rx="4.5" fill="#5b9158"/>
<path d="M1.5,4.5 Q1.5,1.5 4.5,1.5 H14.5 Q17.5,1.5 17.5,4.5 V8.55 H1.5 Z" fill="#8cb68a"/>
<path d="M9.5,3.8000000000000003 V15.200000000000001 M3.8000000000000003,9.5 H15.200000000000001" stroke="#fff" stroke-width="3.6" stroke-linecap="round"/>
</g></svg>
<div style="left:67px;top:213px;width:1091px;height:1139px;background:#eeeeee;border-left:1px solid #a9a9a9;border-bottom:1px solid #b0b0b0;"></div>
<div style="left:110px;top:245px;width:1px;height:8px;background:#2e2e2e;"></div><div style="left:124px;top:245px;width:1px;height:8px;background:#2e2e2e;"></div><div style="left:139px;top:245px;width:1px;height:8px;background:#2e2e2e;"></div><div style="left:153px;top:245px;width:1px;height:8px;background:#2e2e2e;"></div><div style="left:167px;top:214px;width:1px;height:39px;background:#2e2e2e;"></div><div class="t" style="left:170.5px;top:219.7px;font-size:23px;color:#3c3c3c;">68</div><div style="left:182px;top:245px;width:1px;height:8px;background:#2e2e2e;"></div><div style="left:196px;top:245px;width:1px;height:8px;background:#2e2e2e;"></div><div style="left:210px;top:245px;width:1px;height:8px;background:#2e2e2e;"></div><div style="left:225px;top:245px;width:1px;height:8px;background:#2e2e2e;"></div><div style="left:239px;top:240px;width:1px;height:13px;background:#2e2e2e;"></div><div style="left:253px;top:245px;width:1px;height:8px;background:#2e2e2e;"></div><div style="left:268px;top:245px;width:1px;height:8px;background:#2e2e2e;"></div><div style="left:282px;top:245px;width:1px;height:8px;background:#2e2e2e;"></div><div style="left:297px;top:245px;width:1px;height:8px;background:#2e2e2e;"></div><div style="left:311px;top:214px;width:1px;height:39px;background:#2e2e2e;"></div><div class="t" style="left:314.5px;top:219.7px;font-size:23px;color:#3c3c3c;">70</div><div style="left:325px;top:245px;width:1px;height:8px;background:#2e2e2e;"></div><div style="left:340px;top:245px;width:1px;height:8px;background:#2e2e2e;"></div><div style="left:354px;top:245px;width:1px;height:8px;background:#2e2e2e;"></div><div style="left:368px;top:245px;width:1px;height:8px;background:#2e2e2e;"></div><div style="left:383px;top:240px;width:1px;height:13px;background:#2e2e2e;"></div><div style="left:397px;top:245px;width:1px;height:8px;background:#2e2e2e;"></div><div style="left:411px;top:245px;width:1px;height:8px;background:#2e2e2e;"></div><div style="left:426px;top:245px;width:1px;height:8px;background:#2e2e2e;"></div><div style="left:440px;top:245px;width:1px;height:8px;background:#2e2e2e;"></div><div style="left:454px;top:214px;width:1px;height:39px;background:#2e2e2e;"></div><div class="t" style="left:457.5px;top:219.7px;font-size:23px;color:#3c3c3c;">72</div><div style="left:469px;top:245px;width:1px;height:8px;background:#2e2e2e;"></div><div style="left:483px;top:245px;width:1px;height:8px;background:#2e2e2e;"></div><div style="left:497px;top:245px;width:1px;height:8px;background:#2e2e2e;"></div><div style="left:512px;top:245px;width:1px;height:8px;background:#2e2e2e;"></div><div style="left:526px;top:240px;width:1px;height:13px;background:#2e2e2e;"></div><div style="left:540px;top:245px;width:1px;height:8px;background:#2e2e2e;"></div><div style="left:555px;top:245px;width:1px;height:8px;background:#2e2e2e;"></div><div style="left:569px;top:245px;width:1px;height:8px;background:#2e2e2e;"></div><div style="left:583px;top:245px;width:1px;height:8px;background:#2e2e2e;"></div><div style="left:598px;top:214px;width:1px;height:39px;background:#2e2e2e;"></div><div class="t" style="left:601.5px;top:219.7px;font-size:23px;color:#3c3c3c;">74</div><div style="left:612px;top:245px;width:1px;height:8px;background:#2e2e2e;"></div><div style="left:627px;top:245px;width:1px;height:8px;background:#2e2e2e;"></div><div style="left:641px;top:245px;width:1px;height:8px;background:#2e2e2e;"></div><div style="left:655px;top:245px;width:1px;height:8px;background:#2e2e2e;"></div><div style="left:670px;top:240px;width:1px;height:13px;background:#2e2e2e;"></div><div style="left:684px;top:245px;width:1px;height:8px;background:#2e2e2e;"></div><div style="left:698px;top:245px;width:1px;height:8px;background:#2e2e2e;"></div><div style="left:713px;top:245px;width:1px;height:8px;background:#2e2e2e;"></div><div style="left:727px;top:245px;width:1px;height:8px;background:#2e2e2e;"></div><div style="left:741px;top:214px;width:1px;height:39px;background:#2e2e2e;"></div><div class="t" style="left:744.5px;top:219.7px;font-size:23px;color:#3c3c3c;">76</div><div style="left:756px;top:245px;width:1px;height:8px;background:#2e2e2e;"></div><div style="left:770px;top:245px;width:1px;height:8px;background:#2e2e2e;"></div><div style="left:784px;top:245px;width:1px;height:8px;background:#2e2e2e;"></div><div style="left:799px;top:245px;width:1px;height:8px;background:#2e2e2e;"></div><div style="left:813px;top:240px;width:1px;height:13px;background:#2e2e2e;"></div><div style="left:827px;top:245px;width:1px;height:8px;background:#2e2e2e;"></div><div style="left:842px;top:245px;width:1px;height:8px;background:#2e2e2e;"></div><div style="left:856px;top:245px;width:1px;height:8px;background:#2e2e2e;"></div><div style="left:870px;top:245px;width:1px;height:8px;background:#2e2e2e;"></div><div style="left:885px;top:214px;width:1px;height:39px;background:#2e2e2e;"></div><div class="t" style="left:888.5px;top:219.7px;font-size:23px;color:#3c3c3c;">78</div><div style="left:899px;top:245px;width:1px;height:8px;background:#2e2e2e;"></div><div style="left:913px;top:245px;width:1px;height:8px;background:#2e2e2e;"></div><div style="left:928px;top:245px;width:1px;height:8px;background:#2e2e2e;"></div><div style="left:942px;top:245px;width:1px;height:8px;background:#2e2e2e;"></div><div style="left:957px;top:240px;width:1px;height:13px;background:#2e2e2e;"></div><div style="left:971px;top:245px;width:1px;height:8px;background:#2e2e2e;"></div><div style="left:985px;top:245px;width:1px;height:8px;background:#2e2e2e;"></div><div style="left:1000px;top:245px;width:1px;height:8px;background:#2e2e2e;"></div><div style="left:1014px;top:245px;width:1px;height:8px;background:#2e2e2e;"></div><div style="left:1028px;top:214px;width:1px;height:39px;background:#2e2e2e;"></div><div class="t" style="left:1031.5px;top:219.7px;font-size:23px;color:#3c3c3c;">80</div><div style="left:1043px;top:245px;width:1px;height:8px;background:#2e2e2e;"></div><div style="left:1057px;top:245px;width:1px;height:8px;background:#2e2e2e;"></div><div style="left:1071px;top:245px;width:1px;height:8px;background:#2e2e2e;"></div><div style="left:1086px;top:245px;width:1px;height:8px;background:#2e2e2e;"></div><div style="left:1100px;top:240px;width:1px;height:13px;background:#2e2e2e;"></div><div style="left:1114px;top:245px;width:1px;height:8px;background:#2e2e2e;"></div><div style="left:1129px;top:245px;width:1px;height:8px;background:#2e2e2e;"></div><div style="left:1143px;top:245px;width:1px;height:8px;background:#2e2e2e;"></div><div style="left:1157px;top:245px;width:1px;height:8px;background:#2e2e2e;"></div>
<div style="left:94px;top:266px;width:13px;height:1px;background:#2e2e2e;"></div><div style="left:99px;top:280px;width:8px;height:1px;background:#2e2e2e;"></div><div style="left:99px;top:294px;width:8px;height:1px;background:#2e2e2e;"></div><div style="left:99px;top:309px;width:8px;height:1px;background:#2e2e2e;"></div><div style="left:99px;top:323px;width:8px;height:1px;background:#2e2e2e;"></div><div style="left:68px;top:337px;width:39px;height:1px;background:#2e2e2e;"></div><div class="t" style="left:73.8px;top:369px;font-size:23px;color:#3c3c3c;transform-origin:0 0;transform:rotate(-90deg);">68</div><div style="left:99px;top:352px;width:8px;height:1px;background:#2e2e2e;"></div><div style="left:99px;top:366px;width:8px;height:1px;background:#2e2e2e;"></div><div style="left:99px;top:380px;width:8px;height:1px;background:#2e2e2e;"></div><div style="left:99px;top:395px;width:8px;height:1px;background:#2e2e2e;"></div><div style="left:94px;top:409px;width:13px;height:1px;background:#2e2e2e;"></div><div style="left:99px;top:423px;width:8px;height:1px;background:#2e2e2e;"></div><div style="left:99px;top:438px;width:8px;height:1px;background:#2e2e2e;"></div><div style="left:99px;top:452px;width:8px;height:1px;background:#2e2e2e;"></div><div style="left:99px;top:467px;width:8px;height:1px;background:#2e2e2e;"></div><div style="left:68px;top:481px;width:39px;height:1px;background:#2e2e2e;"></div><div class="t" style="left:73.8px;top:513px;font-size:23px;color:#3c3c3c;transform-origin:0 0;transform:rotate(-90deg);">70</div><div style="left:99px;top:495px;width:8px;height:1px;background:#2e2e2e;"></div><div style="left:99px;top:510px;width:8px;height:1px;background:#2e2e2e;"></div><div style="left:99px;top:524px;width:8px;height:1px;background:#2e2e2e;"></div><div style="left:99px;top:538px;width:8px;height:1px;background:#2e2e2e;"></div><div style="left:94px;top:553px;width:13px;height:1px;background:#2e2e2e;"></div><div style="left:99px;top:567px;width:8px;height:1px;background:#2e2e2e;"></div><div style="left:99px;top:581px;width:8px;height:1px;background:#2e2e2e;"></div><div style="left:99px;top:596px;width:8px;height:1px;background:#2e2e2e;"></div><div style="left:99px;top:610px;width:8px;height:1px;background:#2e2e2e;"></div><div style="left:68px;top:624px;width:39px;height:1px;background:#2e2e2e;"></div><div class="t" style="left:73.8px;top:656px;font-size:23px;color:#3c3c3c;transform-origin:0 0;transform:rotate(-90deg);">72</div><div style="left:99px;top:639px;width:8px;height:1px;background:#2e2e2e;"></div><div style="left:99px;top:653px;width:8px;height:1px;background:#2e2e2e;"></div><div style="left:99px;top:667px;width:8px;height:1px;background:#2e2e2e;"></div><div style="left:99px;top:682px;width:8px;height:1px;background:#2e2e2e;"></div><div style="left:94px;top:696px;width:13px;height:1px;background:#2e2e2e;"></div><div style="left:99px;top:710px;width:8px;height:1px;background:#2e2e2e;"></div><div style="left:99px;top:725px;width:8px;height:1px;background:#2e2e2e;"></div><div style="left:99px;top:739px;width:8px;height:1px;background:#2e2e2e;"></div><div style="left:99px;top:753px;width:8px;height:1px;background:#2e2e2e;"></div><div style="left:68px;top:768px;width:39px;height:1px;background:#2e2e2e;"></div><div class="t" style="left:73.8px;top:800px;font-size:23px;color:#3c3c3c;transform-origin:0 0;transform:rotate(-90deg);">74</div><div style="left:99px;top:782px;width:8px;height:1px;background:#2e2e2e;"></div><div style="left:99px;top:797px;width:8px;height:1px;background:#2e2e2e;"></div><div style="left:99px;top:811px;width:8px;height:1px;background:#2e2e2e;"></div><div style="left:99px;top:825px;width:8px;height:1px;background:#2e2e2e;"></div><div style="left:94px;top:840px;width:13px;height:1px;background:#2e2e2e;"></div><div style="left:99px;top:854px;width:8px;height:1px;background:#2e2e2e;"></div><div style="left:99px;top:868px;width:8px;height:1px;background:#2e2e2e;"></div><div style="left:99px;top:883px;width:8px;height:1px;background:#2e2e2e;"></div><div style="left:99px;top:897px;width:8px;height:1px;background:#2e2e2e;"></div><div style="left:68px;top:911px;width:39px;height:1px;background:#2e2e2e;"></div><div class="t" style="left:73.8px;top:943px;font-size:23px;color:#3c3c3c;transform-origin:0 0;transform:rotate(-90deg);">76</div><div style="left:99px;top:926px;width:8px;height:1px;background:#2e2e2e;"></div><div style="left:99px;top:940px;width:8px;height:1px;background:#2e2e2e;"></div><div style="left:99px;top:954px;width:8px;height:1px;background:#2e2e2e;"></div><div style="left:99px;top:969px;width:8px;height:1px;background:#2e2e2e;"></div><div style="left:94px;top:983px;width:13px;height:1px;background:#2e2e2e;"></div><div style="left:99px;top:997px;width:8px;height:1px;background:#2e2e2e;"></div><div style="left:99px;top:1012px;width:8px;height:1px;background:#2e2e2e;"></div><div style="left:99px;top:1026px;width:8px;height:1px;background:#2e2e2e;"></div><div style="left:99px;top:1040px;width:8px;height:1px;background:#2e2e2e;"></div><div style="left:68px;top:1055px;width:39px;height:1px;background:#2e2e2e;"></div><div class="t" style="left:73.8px;top:1087px;font-size:23px;color:#3c3c3c;transform-origin:0 0;transform:rotate(-90deg);">78</div><div style="left:99px;top:1069px;width:8px;height:1px;background:#2e2e2e;"></div><div style="left:99px;top:1083px;width:8px;height:1px;background:#2e2e2e;"></div><div style="left:99px;top:1098px;width:8px;height:1px;background:#2e2e2e;"></div><div style="left:99px;top:1112px;width:8px;height:1px;background:#2e2e2e;"></div><div style="left:94px;top:1127px;width:13px;height:1px;background:#2e2e2e;"></div><div style="left:99px;top:1141px;width:8px;height:1px;background:#2e2e2e;"></div><div style="left:99px;top:1155px;width:8px;height:1px;background:#2e2e2e;"></div><div style="left:99px;top:1170px;width:8px;height:1px;background:#2e2e2e;"></div><div style="left:99px;top:1184px;width:8px;height:1px;background:#2e2e2e;"></div><div style="left:68px;top:1198px;width:39px;height:1px;background:#2e2e2e;"></div><div class="t" style="left:73.8px;top:1230px;font-size:23px;color:#3c3c3c;transform-origin:0 0;transform:rotate(-90deg);">80</div><div style="left:99px;top:1213px;width:8px;height:1px;background:#2e2e2e;"></div><div style="left:99px;top:1227px;width:8px;height:1px;background:#2e2e2e;"></div><div style="left:99px;top:1241px;width:8px;height:1px;background:#2e2e2e;"></div><div style="left:99px;top:1256px;width:8px;height:1px;background:#2e2e2e;"></div><div style="left:94px;top:1270px;width:13px;height:1px;background:#2e2e2e;"></div><div style="left:99px;top:1284px;width:8px;height:1px;background:#2e2e2e;"></div><div style="left:99px;top:1299px;width:8px;height:1px;background:#2e2e2e;"></div><div style="left:99px;top:1313px;width:8px;height:1px;background:#2e2e2e;"></div><div style="left:99px;top:1327px;width:8px;height:1px;background:#2e2e2e;"></div><div style="left:68px;top:1342px;width:39px;height:1px;background:#2e2e2e;"></div><div class="t" style="left:73.8px;top:1374px;font-size:23px;color:#3c3c3c;transform-origin:0 0;transform:rotate(-90deg);">82</div>
<div style="left:1119px;top:213px;width:2px;height:40px;background:#ff0000;"></div>
<div style="left:68px;top:564px;width:39px;height:2px;background:#ff0000;"></div>
<div style="left:107px;top:253px;width:1023px;height:1070px;background:#ffffff;"></div>
<div style="left:1130px;top:253px;width:28px;height:1070px;background:#e4e4e4;border-left:1px solid #b4b4b4;"></div>
<div style="left:1131px;top:253px;width:27px;height:27px;background:linear-gradient(90deg,#fdfdfd,#f0f0f0);border-bottom:1px solid #b4b4b4;"></div>
<svg style="left:1131px;top:253px" width="27" height="27"><polygon points="6.5,12 13.5,4.5 20.5,12" transform="translate(0,3)" fill="#5a5a5a"/></svg>
<div style="left:1131px;top:626px;width:27px;height:65px;background:linear-gradient(90deg,#ffffff,#f0f0f0);border-top:1px solid #b4b4b4;border-bottom:1px solid #b4b4b4;"></div>
<div style="left:1131px;top:1296px;width:27px;height:27px;background:linear-gradient(90deg,#fdfdfd,#f0f0f0);border-top:1px solid #b4b4b4;"></div>
<svg style="left:1131px;top:1296px" width="27" height="27"><polygon points="6.5,10 20.5,10 13.5,17.5" fill="#5a5a5a"/></svg>
<div style="left:107px;top:1323px;width:1023px;height:28px;background:#e4e4e4;border-top:1px solid #b4b4b4;"></div>
<div style="left:107px;top:1324px;width:27px;height:27px;background:linear-gradient(#fdfdfd,#f0f0f0);border-right:1px solid #b4b4b4;"></div>
<svg style="left:107px;top:1324px" width="27" height="27"><polygon points="10,13.5 17.5,6.5 17.5,20.5" fill="#5a5a5a"/></svg>
<div style="left:374px;top:1324px;width:53px;height:27px;background:linear-gradient(#ffffff,#f0f0f0);border-left:1px solid #b4b4b4;border-right:1px solid #b4b4b4;"></div>
<div style="left:1103px;top:1324px;width:27px;height:27px;background:linear-gradient(#fdfdfd,#f0f0f0);border-left:1px solid #b4b4b4;"></div>
<svg style="left:1103px;top:1324px" width="27" height="27"><polygon points="17,13.5 9.5,6.5 9.5,20.5" fill="#5a5a5a"/></svg>
<div style="left:1130px;top:1323px;width:28px;height:28px;background:#eeeeee;"></div>
<svg style="left:0;top:0" width="1130" height="1323">
<polygon points="644.7,549.05 802.45,706.8 644.7,864.55 486.95,706.8" fill="#4a79b4" stroke="#325782" stroke-width="28.6" stroke-linejoin="bevel"/>
<g fill="none" stroke="#3a8cc8" stroke-width="1">
<rect x="483.5" y="546.5" width="10" height="10"/><rect x="795.5" y="546.5" width="10" height="10"/>
<rect x="483.5" y="857.5" width="10" height="10"/><rect x="795.5" y="857.5" width="10" height="10"/>
</g>
<rect x="483.5" y="546.5" width="322" height="321" fill="none" stroke="#3aa0d8" stroke-width="1"/>
<rect x="483.5" y="546.5" width="322" height="321" fill="none" stroke="#6a0a30" stroke-width="1" stroke-dasharray="4,2"/>
<g fill="#ffffff" stroke="#3a8cc8" stroke-width="1">
<rect x="639.5" y="546.5" width="10" height="10"/><rect x="639.5" y="857.5" width="10" height="10"/>
<rect x="483.5" y="701.5" width="10" height="10"/><rect x="795.5" y="701.5" width="10" height="10"/>
</g>
</svg>
<div style="left:1158px;top:213px;width:885px;height:1138px;background:#eeeeee;"></div>
<div style="left:1170px;top:271px;width:873px;height:1px;background:#b9b9b9;"></div>
<div style="left:1294px;top:216px;width:217px;height:56px;background:linear-gradient(#dedede,#d8d8d8 85%,#cfcfcf);border:1px solid #bcbcbc;border-bottom:none;border-radius:3px 3px 0 0;"></div>
<div style="left:1170px;top:214px;width:124px;height:58px;background:linear-gradient(#f9f9f9,#efefef);border:1px solid #b9b9b9;border-bottom:none;border-radius:3px 3px 0 0;"></div>
<div class="t" style="left:1194.14px;top:230.52px;font-size:28.8px;font-weight:400;color:#000;letter-spacing:0.664px;">Items</div>
<div class="t" style="left:1315.57px;top:230.52px;font-size:28.8px;font-weight:400;color:#000;letter-spacing:0.349px;">Undo History</div>
<div class="t" style="left:1173.24px;top:280.42px;font-size:28.8px;font-weight:400;color:#000;letter-spacing:0.889px;">Items</div>
<svg style="left:2013px;top:288px" width="28" height="11">
<rect x="0.5" y="0.5" width="10" height="10" rx="2" fill="none" stroke="#7a7a7a"/>
<rect x="2.5" y="4.5" width="4" height="4" fill="none" stroke="#7a7a7a"/><path d="M4.5,4.5 V2.5 H8.5 V6.5 H6.5" fill="none" stroke="#7a7a7a"/>
<rect x="16.5" y="0.5" width="10" height="10" rx="2" fill="none" stroke="#7a7a7a"/>
<path d="M19,3 L24,8 M24,3 L19,8" stroke="#555" stroke-width="2"/>
</svg>
<div style="left:1170px;top:314px;width:873px;height:138px;background:#ffffff;border:1px solid #b4b4b4;"></div>
<div style="left:1171px;top:315px;width:871px;height:43px;background:linear-gradient(#fbfbfb,#f3f3f3 50%,#e9e9e9);border-bottom:1px solid #b4b4b4;"></div>
<div style="left:1226px;top:315px;width:1px;height:43px;background:#c8c8c8;"></div>
<div style="left:1282px;top:315px;width:1px;height:43px;background:#c8c8c8;"></div>
<svg style="left:1176px;top:325px" width="32" height="24">
<path d="M1,14 Q16,1 31,14 Q16,25 1,14 Z" fill="#fff" stroke="#777" stroke-width="1.3"/>
<circle cx="15.5" cy="13" r="6.5" fill="#aaa" stroke="#666" stroke-width="1"/>
<circle cx="15.5" cy="12.5" r="3" fill="#111"/><circle cx="14.2" cy="11.5" r="1" fill="#fff"/>
<path d="M1,8 Q14,-1 29,5" fill="none" stroke="#777" stroke-width="1.3"/>
</svg>
<svg style="left:1233px;top:323px" width="26" height="32">
<path d="M7,15 V9 Q7,2 13,2 Q19,2 19,9 V15" fill="none" stroke="#7a7a7a" stroke-width="4"/><path d="M7,15 V9 Q7,2 13,2 Q19,2 19,9 V15" fill="none" stroke="#d0d0d0" stroke-width="1.3"/>
<rect x="2" y="14" width="24" height="16" rx="2.5" fill="#6e6e6e"/>
</svg>
<div class="t" style="left:1286.74px;top:323.62px;font-size:28.8px;font-weight:400;color:#000;letter-spacing:1.373px;">Item</div>
<div style="left:1174px;top:364px;width:28px;height:28px;background:linear-gradient(#ffffff,#f8f8f8);border:1px solid #b9b9b9;border-radius:2px;"></div><svg style="left:1174px;top:364px" width="28" height="28"><path d="M5,15 L11,23 L23,6" fill="none" stroke="#000" stroke-width="3.6" stroke-linejoin="miter"/></svg>
<div style="left:1230px;top:364px;width:28px;height:28px;background:linear-gradient(#ffffff,#f8f8f8);border:1px solid #b9b9b9;border-radius:2px;"></div>
<svg style="left:1286px;top:363px" width="32" height="31">
<polygon points="15.5,1.5 19.4,11.2 29.8,11.7 21.8,18.3 24.4,28.5 15.5,22.8 6.6,28.5 9.2,18.3 1.2,11.7 11.6,11.2" fill="#eeeeee" stroke="#909090" stroke-width="1.8" stroke-linejoin="miter"/>
</svg>
<div class="t" style="left:1324.38px;top:363.22px;font-size:28.8px;font-weight:700;color:#000;letter-spacing:0.027px;">&lt;Marker&gt;</div>
<div style="left:1600px;top:457px;width:1px;height:1px;background:#a0a0a0;"></div>
<div style="left:1603px;top:457px;width:1px;height:1px;background:#a0a0a0;"></div>
<div style="left:1606px;top:457px;width:1px;height:1px;background:#a0a0a0;"></div>
<div style="left:1609px;top:457px;width:1px;height:1px;background:#a0a0a0;"></div>
<div style="left:1612px;top:457px;width:1px;height:1px;background:#a0a0a0;"></div>
<div style="left:1615px;top:457px;width:1px;height:1px;background:#a0a0a0;"></div>
<div style="left:1808px;top:520px;width:235px;height:1px;background:#b9b9b9;"></div>
<div style="left:1170px;top:466px;width:137px;height:55px;background:linear-gradient(#dedede,#d8d8d8 85%,#cfcfcf);border:1px solid #bcbcbc;border-bottom:none;border-radius:3px 3px 0 0;"></div>
<div style="left:1556px;top:466px;width:139px;height:55px;background:linear-gradient(#dedede,#d8d8d8 85%,#cfcfcf);border:1px solid #bcbcbc;border-bottom:none;border-radius:3px 3px 0 0;"></div>
<div style="left:1694px;top:466px;width:115px;height:55px;background:linear-gradient(#dedede,#d8d8d8 85%,#cfcfcf);border:1px solid #bcbcbc;border-bottom:none;border-radius:3px 3px 0 0;"></div>
<div style="left:1306px;top:464px;width:251px;height:58px;background:linear-gradient(#f9f9f9,#efefef);border:1px solid #b9b9b9;border-bottom:none;border-radius:3px 3px 0 0;"></div>
<div class="t" style="left:1194.02px;top:482.12px;font-size:28.8px;font-weight:400;color:#000;letter-spacing:-0.016px;">Layout</div>
<div class="t" style="left:1329.24px;top:482.12px;font-size:28.8px;font-weight:400;color:#000;letter-spacing:0.451px;">Item Properties</div>
<div class="t" style="left:1579.16px;top:482.12px;font-size:28.8px;font-weight:400;color:#000;letter-spacing:-0.195px;">Guides</div>
<div class="t" style="left:1719.33px;top:482.12px;font-size:28.8px;font-weight:400;color:#000;letter-spacing:0.268px;">Atlas</div>
<div class="t" style="left:1173.54px;top:530.12px;font-size:28.8px;font-weight:400;color:#000;letter-spacing:0.415px;">Item Properties</div>
<svg style="left:2013px;top:538px" width="28" height="11">
<rect x="0.5" y="0.5" width="10" height="10" rx="2" fill="none" stroke="#7a7a7a"/>
<rect x="2.5" y="4.5" width="4" height="4" fill="none" stroke="#7a7a7a"/><path d="M4.5,4.5 V2.5 H8.5 V6.5 H6.5" fill="none" stroke="#7a7a7a"/>
<rect x="16.5" y="0.5" width="10" height="10" rx="2" fill="none" stroke="#7a7a7a"/>
<path d="M19,3 L24,8 M24,3 L19,8" stroke="#555" stroke-width="2"/>
</svg>
<div style="left:1170px;top:564px;width:873px;height:40px;background:#c8c8c8;"></div>
<div class="t" style="left:1179.06px;top:570.02px;font-size:28.8px;font-weight:700;color:#000;letter-spacing:0.042px;">Marker</div>
<div style="left:1170px;top:604px;width:873px;height:747px;border-left:1px solid #b4b4b4;"></div>
<div style="left:2014px;top:604px;width:29px;height:747px;background:#e4e4e4;border-left:1px solid #b4b4b4;"></div>
<div style="left:2015px;top:604px;width:28px;height:28px;background:linear-gradient(90deg,#fdfdfd,#f0f0f0);border-bottom:1px solid #c4c4c4;"></div>
<svg style="left:2015px;top:604px" width="28" height="28"><polygon points="7,17 14,9.5 21,17" fill="#5a5a5a"/></svg>
<div style="left:2015px;top:632px;width:28px;height:455px;background:linear-gradient(90deg,#ffffff,#f2f2f2);border-bottom:1px solid #b4b4b4;"></div>
<div style="left:2015px;top:1323px;width:28px;height:28px;background:linear-gradient(90deg,#fdfdfd,#f0f0f0);border-top:1px solid #c4c4c4;"></div>
<svg style="left:2015px;top:1323px" width="28" height="28"><polygon points="7,11 21,11 14,18.5" fill="#5a5a5a"/></svg>
<svg style="left:1191px;top:640px" width="11" height="7.5"><polygon points="0,0 11,0 5.5,7.5" fill="#3c3c3c"/></svg>
<div class="t" style="left:1210.96px;top:628.32px;font-size:28.8px;font-weight:700;color:#000;letter-spacing:-0.465px;">Main Properties</div>
<div style="left:1190px;top:663px;width:806px;height:91px;background:#e9e9e9;border:1px solid #d6d6d6;border-radius:2px;"></div>
<div class="t" style="left:1210.00px;top:694.37px;font-size:28.8px;font-weight:400;color:#000;letter-spacing:0.498px;">Symbol</div>
<div style="left:1320px;top:683px;width:631px;height:50px;background:linear-gradient(#ffffff,#f1f1f1);border:1px solid #b0b0b0;border-radius:3px;"></div>
<div style="left:1952px;top:683px;width:23px;height:50px;background:linear-gradient(#ffffff,#f1f1f1);border:1px solid #b0b0b0;border-radius:3px;"></div>
<svg style="left:1958px;top:704px" width="12" height="8"><polygon points="0,0 12,0 6.0,8" fill="#555"/></svg>
<svg style="left:1610px;top:683px" width="50" height="50"><polygon points="25,7 42.5,24.7 25,42.4 7.5,24.7" fill="#4a79b4" stroke="#325782" stroke-width="2.6" stroke-linejoin="round"/></svg>
<svg style="left:1194px;top:781px" width="7.5" height="11"><polygon points="0,0 7.5,5.5 0,11" fill="#3c3c3c"/></svg>
<div class="t" style="left:1210.96px;top:771.32px;font-size:28.8px;font-weight:700;color:#000;letter-spacing:-1.051px;">Position and Size</div>
<svg style="left:1194px;top:835px" width="7.5" height="11"><polygon points="0,0 7.5,5.5 0,11" fill="#3c3c3c"/></svg>
<div class="t" style="left:1211.46px;top:825.92px;font-size:28.8px;font-weight:700;color:#000;letter-spacing:-0.316px;">Rotation</div>
<svg style="left:1194px;top:883px" width="7.5" height="11"><polygon points="0,0 7.5,5.5 0,11" fill="#3c3c3c"/></svg>
<div style="left:1209px;top:872px;width:28px;height:28px;background:linear-gradient(#ffffff,#f8f8f8);border:1px solid #b9b9b9;border-radius:2px;"></div>
<div class="t" style="left:1251.66px;top:873.62px;font-size:28.8px;font-weight:700;color:#000;letter-spacing:-0.355px;">Frame</div>
<svg style="left:1194px;top:931px" width="7.5" height="11"><polygon points="0,0 7.5,5.5 0,11" fill="#3c3c3c"/></svg>
<div style="left:1209px;top:920px;width:28px;height:28px;background:linear-gradient(#ffffff,#f8f8f8);border:1px solid #b9b9b9;border-radius:2px;"></div>
<div class="t" style="left:1251.66px;top:921.52px;font-size:28.8px;font-weight:700;color:#000;letter-spacing:-1.096px;">Background</div>
<svg style="left:1194px;top:979px" width="7.5" height="11"><polygon points="0,0 7.5,5.5 0,11" fill="#3c3c3c"/></svg>
<div class="t" style="left:1211.46px;top:969.32px;font-size:28.8px;font-weight:700;color:#000;letter-spacing:0.120px;">Item ID</div>
<svg style="left:1194px;top:1027px" width="7.5" height="11"><polygon points="0,0 7.5,5.5 0,11" fill="#3c3c3c"/></svg>
<div class="t" style="left:1211.46px;top:1017.12px;font-size:28.8px;font-weight:700;color:#000;letter-spacing:-0.725px;">Rendering</div>
<svg style="left:1191px;top:1076px" width="11" height="7.5"><polygon points="0,0 11,0 5.5,7.5" fill="#3c3c3c"/></svg>
<div class="t" style="left:1212.58px;top:1064.92px;font-size:28.8px;font-weight:700;color:#000;letter-spacing:-0.520px;">Variables</div>
<div style="left:1190px;top:1100px;width:806px;height:260px;background:#e9e9e9;border:1px solid #d6d6d6;border-radius:2px;"></div>
<div style="left:1213px;top:1123px;width:759px;height:240px;background:#ffffff;border:1px solid #b4b4b4;"></div>
<div style="left:1214px;top:1124px;width:757px;height:43px;background:linear-gradient(#fbfbfb,#f3f3f3 50%,#e9e9e9);border-bottom:1px solid #b4b4b4;"></div>
<div style="left:1602px;top:1124px;width:1px;height:43px;background:#c8c8c8;"></div>
<div class="t" style="left:1218.96px;top:1132.22px;font-size:28.8px;font-weight:400;color:#000;letter-spacing:0.243px;">Variable</div>
<div class="t" style="left:1607.76px;top:1131.62px;font-size:28.8px;font-weight:400;color:#000;letter-spacing:0.168px;">Value</div>
<div style="left:1214px;top:1207px;width:757px;height:1px;background:#c8c8c8;"></div>
<svg style="left:1221px;top:1182px" width="7" height="11"><polygon points="0,0 7,5.5 0,11" fill="#808080"/></svg>
<div class="t" style="left:1237.05px;top:1175.12px;font-size:28.8px;font-weight:700;color:#000;letter-spacing:-0.440px;">Global</div>
<div style="left:1214px;top:1247px;width:757px;height:1px;background:#c8c8c8;"></div>
<svg style="left:1221px;top:1222px" width="7" height="11"><polygon points="0,0 7,5.5 0,11" fill="#808080"/></svg>
<div class="t" style="left:1236.26px;top:1215.12px;font-size:28.8px;font-weight:700;color:#000;letter-spacing:-0.671px;">Project</div>
<div style="left:1214px;top:1287px;width:757px;height:1px;background:#c8c8c8;"></div>
<svg style="left:1221px;top:1262px" width="7" height="11"><polygon points="0,0 7,5.5 0,11" fill="#808080"/></svg>
<div class="t" style="left:1236.26px;top:1255.12px;font-size:28.8px;font-weight:700;color:#000;letter-spacing:-1.018px;">Layout</div>
<div style="left:1214px;top:1327px;width:757px;height:1px;background:#c8c8c8;"></div>
<svg style="left:1219px;top:1304px" width="11" height="7"><polygon points="0,0 11,0 5.5,7" fill="#808080"/></svg>
<div class="t" style="left:1236.26px;top:1295.12px;font-size:28.8px;font-weight:700;color:#000;letter-spacing:-0.470px;">Layout Item</div>
<div style="left:1214px;top:1328px;width:757px;height:23px;background:#c1fbfb;"></div>
<div style="left:1170px;top:1328px;width:845px;height:23px;overflow:hidden;"><div class="t" style="left:89.07px;top:9.62px;font-size:28.8px;font-weight:400;color:#000;font-style:italic;">item_id</div><div class="t" style="left:438.19px;top:9.62px;font-size:28.8px;font-weight:400;color:#000;font-style:italic;">&#x27;&#x27;</div></div>
<div style="left:0px;top:1352px;width:2043px;height:49px;background:#eeeeee;"></div>
<div style="left:107px;top:1351px;width:1051px;height:1px;background:#b4b4b4;"></div>
<div style="left:1170px;top:1351px;width:873px;height:1px;background:#b4b4b4;"></div>
<div style="left:67px;top:1351px;width:40px;height:1px;background:#b0b0b0;"></div>
<div class="t" style="left:0.34px;top:1363.12px;font-size:28.8px;font-weight:400;color:#000;letter-spacing:0.056px;">1 item selected</div>
<div class="t" style="left:1123.34px;top:1363.12px;font-size:28.8px;font-weight:400;color:#000;letter-spacing:-0.586px;">x: 81.2723 mm y: 71.1516 mm page: 1</div>
<div style="left:1612px;top:1355px;width:252px;height:43px;background:#ffffff;border:1px solid #b4b4b4;border-radius:3px;"></div>
<div style="left:1825px;top:1356px;width:38px;height:41px;background:linear-gradient(90deg,#f6f6f6,#ececec);"></div>
<svg style="left:1825px;top:1356px" width="38" height="41"><polygon points="12,18 26,18 19,25" fill="#5a5a5a"/></svg>
<div class="t" style="left:1615.63px;top:1362.42px;font-size:28.8px;font-weight:400;color:#000;letter-spacing:1.874px;">949.0%</div>
<div style="left:1872px;top:1371px;width:113px;height:12px;background:linear-gradient(#5ab4f0,#2f8fd6);border:1px solid #2a70a8;border-radius:3px;"></div>
<div style="left:1984px;top:1362px;width:27px;height:28px;background:linear-gradient(#ffffff,#f0f0f0);border:1px solid #b0b0b0;border-radius:3px;"></div>
</body></html>
